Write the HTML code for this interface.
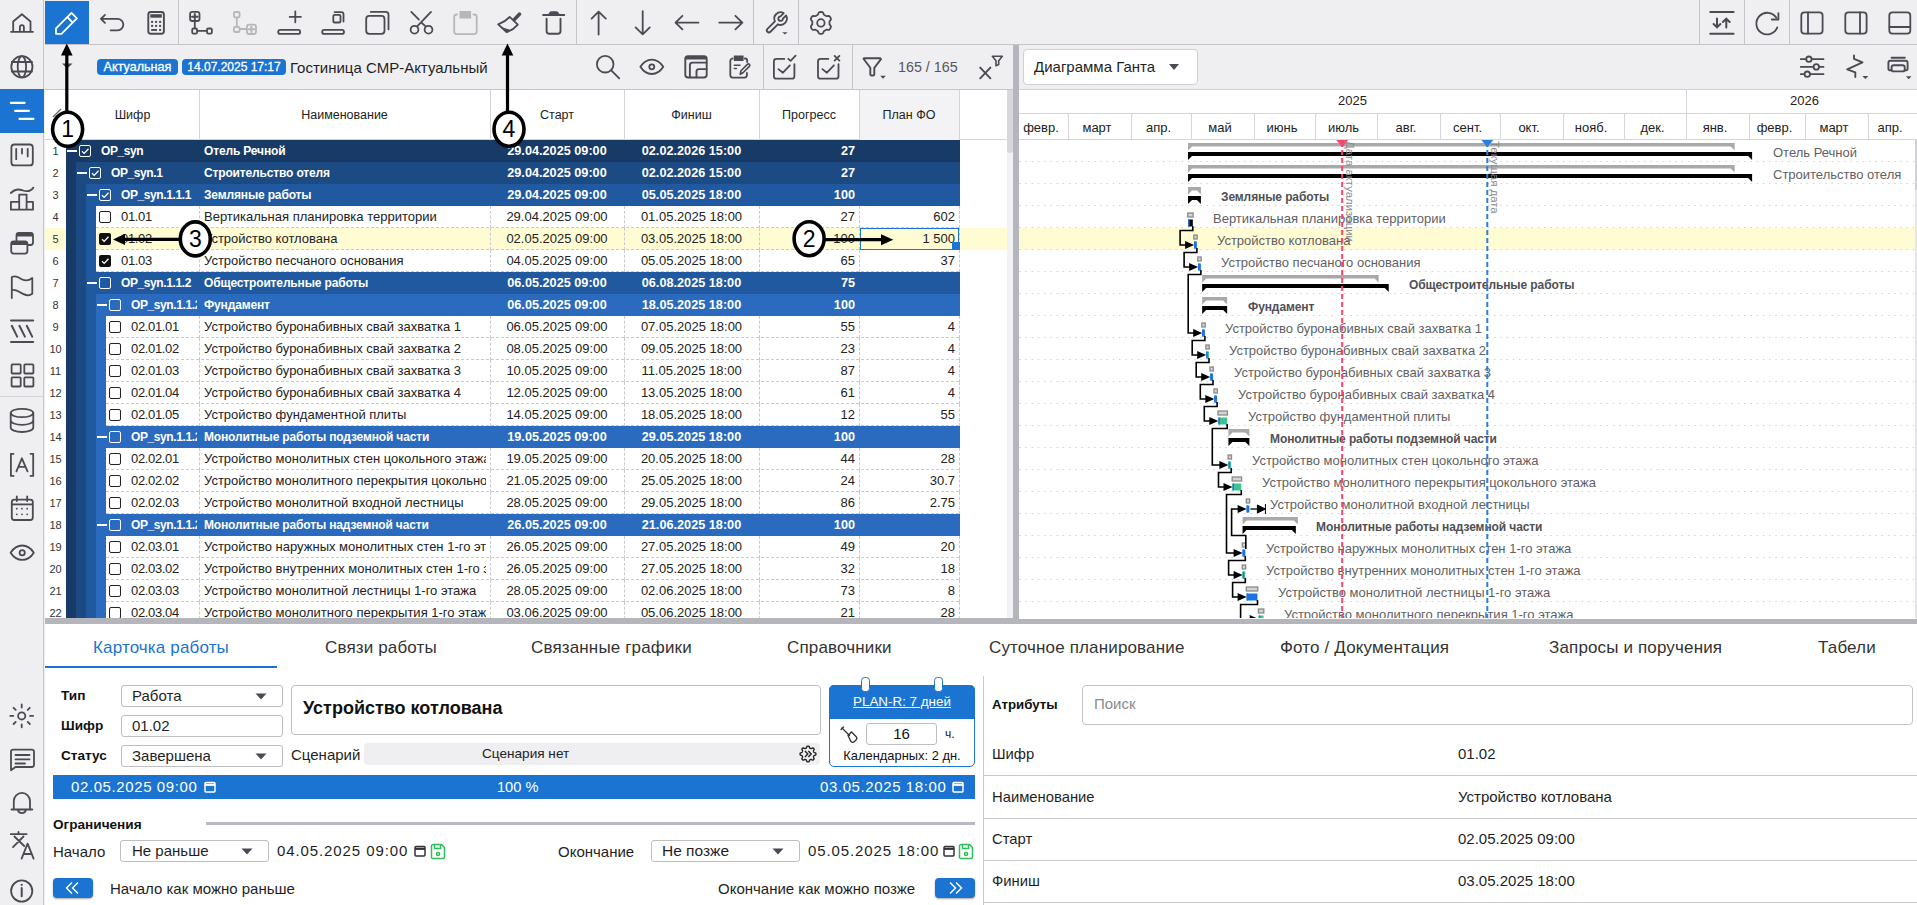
<!DOCTYPE html><html><head><meta charset="utf-8"><style>
html,body{margin:0;padding:0;}
body{width:1917px;height:905px;overflow:hidden;position:relative;background:#efeff2;font-family:"Liberation Sans",sans-serif;color:#222;}
div{box-sizing:border-box;}
</style></head><body>
<div style="position:absolute;left:0px;top:0px;width:44px;height:905px;background:#efeff2;border-right:1px solid #c4c4ca;"></div>
<div style="position:absolute;left:0px;top:89px;width:44px;height:44px;background:#1b74d2;"></div>
<div style="position:absolute;left:0px;top:396px;width:44px;height:1px;background:#d2d2d6;"></div>
<div style="position:absolute;left:45px;top:0px;width:1872px;height:45px;background:#efeff2;border-bottom:1px solid #c4c4ca;"></div>
<div style="position:absolute;left:45px;top:1px;width:44px;height:43px;background:#1b74d2;"></div>
<div style="position:absolute;left:178px;top:0px;width:1px;height:44px;background:#c4c4ca;"></div>
<div style="position:absolute;left:576px;top:0px;width:1px;height:44px;background:#c4c4ca;"></div>
<div style="position:absolute;left:753px;top:0px;width:1px;height:44px;background:#c4c4ca;"></div>
<div style="position:absolute;left:798px;top:0px;width:1px;height:44px;background:#c4c4ca;"></div>
<div style="position:absolute;left:1699px;top:0px;width:1px;height:44px;background:#c4c4ca;"></div>
<div style="position:absolute;left:1744px;top:0px;width:1px;height:44px;background:#c4c4ca;"></div>
<div style="position:absolute;left:1789px;top:0px;width:1px;height:44px;background:#c4c4ca;"></div>
<div style="position:absolute;left:45px;top:45px;width:968px;height:45px;background:#efeff2;border-bottom:1px solid #c4c4ca;"></div>
<div style="position:absolute;left:763px;top:45px;width:1px;height:44px;background:#c4c4ca;"></div>
<div style="position:absolute;left:852px;top:45px;width:1px;height:44px;background:#c4c4ca;"></div>
<div style="position:absolute;left:1019px;top:45px;width:898px;height:45px;background:#efeff2;border-bottom:1px solid #c4c4ca;"></div>
<svg style="position:absolute;left:0;top:0;width:1917px;height:905px;pointer-events:none" viewBox="0 0 1917 905"><path d="M11 31.8H33 M13.2 31.8V21.5L21.9 14.2 30.5 21.5V31.8 M19.9 31.8V27.2a2 2 0 0 1 4 0V31.8" fill="none" stroke="#4a4a52" stroke-width="1.8" stroke-linecap="round" stroke-linejoin="round" /><circle cx="21.9" cy="66.8" r="10.6" fill="none" stroke="#4a4a52" stroke-width="1.8"/><ellipse cx="21.9" cy="66.8" rx="4.2" ry="10.6" fill="none" stroke="#4a4a52" stroke-width="1.8"/><path d="M11.8 62H32 M11.8 71.5H32" fill="none" stroke="#4a4a52" stroke-width="1.8" stroke-linecap="round" stroke-linejoin="round" /><path d="M10.8 102.8H24.6 M15.1 110.8H29 M19.4 118.8H33.5" fill="none" stroke="#fff" stroke-width="2.2" stroke-linecap="round" stroke-linejoin="round" /><rect x="11.4" y="144.5" width="21.4" height="20.9" rx="3" fill="none" stroke="#4a4a52" stroke-width="1.8" stroke-linecap="round" stroke-linejoin="round"/><path d="M16.2 148.8V159.2 M22 148.8V153.5 M27.7 148.8V156.4" fill="none" stroke="#4a4a52" stroke-width="1.8" stroke-linecap="round" stroke-linejoin="round" /><path d="M10.8 193C16 188 20 189.5 23 190.5S30 192 33.4 187.6" fill="none" stroke="#4a4a52" stroke-width="1.8" stroke-linecap="round" stroke-linejoin="round" /><path d="M10.9 209.7V201.8H19.2V209.7Z M19.2 209.7V194.6H26.6V209.7 M26.6 209.7V201.8H33V209.7Z M10.9 209.7H33" fill="none" stroke="#4a4a52" stroke-width="1.8" stroke-linecap="round" stroke-linejoin="round" /><rect x="16.5" y="232.8" width="16.5" height="12.2" rx="2.5" fill="none" stroke="#4a4a52" stroke-width="1.8" stroke-linecap="round" stroke-linejoin="round"/><path d="M16.5 235.5V234.5a2 2 0 0 1 2-2H31a2 2 0 0 1 2 2V236.5H16.5Z" fill="#4a4a52"/><rect x="11.2" y="241.3" width="16.2" height="12.3" rx="2.5" fill="#efeff2" stroke="#4a4a52" stroke-width="1.8"/><path d="M11.2 244.5V243.5a2 2 0 0 1 2-2H25.4a2 2 0 0 1 2 2V245H11.2Z" fill="#4a4a52"/><path d="M11.8 298V277C17 275 19 278 22.2 279.5S28.5 281 32.3 278V293.8C28.5 296.5 25.5 295 22.2 293.5S16 289 11.8 290" fill="none" stroke="#4a4a52" stroke-width="1.8" stroke-linecap="round" stroke-linejoin="round" /><path d="M11 320.4H33.2 M11 342H33.2 M11.8 325.8L17.2 336.6 M19.4 325.8L24.9 336.6 M26.8 325.8L32.2 336.6" fill="none" stroke="#4a4a52" stroke-width="2" stroke-linecap="round" stroke-linejoin="round" /><rect x="11.6" y="364.4" width="9.1" height="9.1" rx="0.8" fill="none" stroke="#4a4a52" stroke-width="1.8" stroke-linecap="round" stroke-linejoin="round"/><rect x="24.3" y="364.4" width="9.1" height="9.1" rx="0.8" fill="none" stroke="#4a4a52" stroke-width="1.8" stroke-linecap="round" stroke-linejoin="round"/><rect x="11.6" y="377.4" width="9.1" height="9.1" rx="0.8" fill="none" stroke="#4a4a52" stroke-width="1.8" stroke-linecap="round" stroke-linejoin="round"/><rect x="24.3" y="377.4" width="9.1" height="9.1" rx="0.8" fill="none" stroke="#4a4a52" stroke-width="1.8" stroke-linecap="round" stroke-linejoin="round"/><ellipse cx="22" cy="413" rx="11.3" ry="4.2" fill="none" stroke="#4a4a52" stroke-width="1.8"/><path d="M10.7 413V427.5C10.7 430 15.5 432 22 432S33.3 430 33.3 427.5V413 M10.7 420.3C10.7 422.8 15.5 424.8 22 424.8S33.3 422.8 33.3 420.3" fill="none" stroke="#4a4a52" stroke-width="1.8" stroke-linecap="round" stroke-linejoin="round" /><path d="M13.5 453.8H10.9V475.9H13.5 M30.5 453.8H33.2V475.9H30.5 M16.4 471.3L21.9 458.3 27.5 471.3 M18.3 466.8H25.6" fill="none" stroke="#4a4a52" stroke-width="1.8" stroke-linecap="round" stroke-linejoin="round" /><rect x="11.8" y="499.6" width="21" height="20.4" rx="2.5" fill="none" stroke="#4a4a52" stroke-width="1.8" stroke-linecap="round" stroke-linejoin="round"/><path d="M16.8 496.3V501 M27.2 496.3V501" fill="none" stroke="#4a4a52" stroke-width="1.8" stroke-linecap="round" stroke-linejoin="round" /><path d="M11.8 503.5H32.8V505.3H11.8Z" fill="#4a4a52"/><circle cx="16.8" cy="508.7" r="0.9" fill="#4a4a52" stroke="#4a4a52" stroke-width="0"/><circle cx="22" cy="508.7" r="0.9" fill="#4a4a52" stroke="#4a4a52" stroke-width="0"/><circle cx="27.2" cy="508.7" r="0.9" fill="#4a4a52" stroke="#4a4a52" stroke-width="0"/><circle cx="16.8" cy="514.3" r="0.9" fill="#4a4a52" stroke="#4a4a52" stroke-width="0"/><circle cx="22" cy="514.3" r="0.9" fill="#4a4a52" stroke="#4a4a52" stroke-width="0"/><circle cx="27.2" cy="514.3" r="0.9" fill="#4a4a52" stroke="#4a4a52" stroke-width="0"/><path d="M10.6 552.7C14 547.5 17.5 545.5 22.2 545.5S30.5 547.5 33.8 552.7C30.5 557.9 27 559.9 22.2 559.9S14 557.9 10.6 552.7Z" fill="none" stroke="#4a4a52" stroke-width="1.8" stroke-linecap="round" stroke-linejoin="round" /><circle cx="22.2" cy="552.7" r="2.6" fill="none" stroke="#4a4a52" stroke-width="1.8"/><circle cx="21.7" cy="715.9" r="3.6" fill="none" stroke="#4a4a52" stroke-width="1.8"/><path d="M21.7 704.5V707.5 M21.7 724.3V727.3 M10.3 715.9H13.3 M30.1 715.9H33.1 M13.6 707.8L15.7 709.9 M27.7 721.9L29.8 724 M13.6 724L15.7 721.9 M27.7 709.9L29.8 707.8" fill="none" stroke="#4a4a52" stroke-width="1.8" stroke-linecap="round" stroke-linejoin="round" /><path d="M11 770.3V751.8A2.2 2.2 0 0 1 13.2 749.6H31.8A2.2 2.2 0 0 1 34 751.8V764.8A2.2 2.2 0 0 1 31.8 767H15.5Z M15.5 755H29.5 M15.5 759.3H29.5 M15.5 763.5H25" fill="none" stroke="#4a4a52" stroke-width="1.8" stroke-linecap="round" stroke-linejoin="round" /><path d="M11.5 809.5H32.3 M13.8 809.5V801A8 8 0 0 1 30 801V809.5 M17.8 809.8A4.2 4.2 0 0 0 26 809.8" fill="none" stroke="#4a4a52" stroke-width="1.8" stroke-linecap="round" stroke-linejoin="round" /><path d="M10.8 834.2H26.6 M18.5 831.8V834.2 M14.4 836.5L24.2 846 M23.5 836.5L13 847.2 M21.6 858.6L27.6 843.6 33.6 858.6 M23.5 854H31.7" fill="none" stroke="#4a4a52" stroke-width="1.8" stroke-linecap="round" stroke-linejoin="round" /><circle cx="21.7" cy="891" r="10.6" fill="none" stroke="#4a4a52" stroke-width="1.8"/><path d="M21.7 888V896.2" fill="none" stroke="#4a4a52" stroke-width="2" stroke-linecap="round" stroke-linejoin="round" /><circle cx="21.7" cy="884.8" r="1.1" fill="#4a4a52" stroke="#4a4a52" stroke-width="0"/><path d="M56 28.4V33.8H61.4L76.9 18.3L71.5 12.9Z M67.3 17.1L72.7 22.5" fill="none" stroke="#fff" stroke-width="1.8" stroke-linecap="round" stroke-linejoin="round" /><path d="M105 14.9L100.9 18.85 105 22.8 M100.9 18.85H117.6A5.75 5.75 0 0 1 117.6 30.35H110.6" fill="none" stroke="#4a4a52" stroke-width="1.8" stroke-linecap="round" stroke-linejoin="round" /><rect x="148.3" y="12" width="15.6" height="21.8" rx="2.5" fill="none" stroke="#4a4a52" stroke-width="1.9" stroke-linecap="round" stroke-linejoin="round"/><path d="M150.3 14.2H161.8V17.7H150.3Z" fill="#4a4a52"/><rect x="151.1" y="20.9" width="2" height="2" fill="#4a4a52"/><rect x="155.1" y="20.9" width="2" height="2" fill="#4a4a52"/><rect x="159.1" y="20.9" width="2" height="2" fill="#4a4a52"/><rect x="151.1" y="24.9" width="2" height="2" fill="#4a4a52"/><rect x="155.1" y="24.9" width="2" height="2" fill="#4a4a52"/><rect x="159.1" y="24.9" width="2" height="2" fill="#4a4a52"/><rect x="159.1" y="28.9" width="2" height="2" fill="#4a4a52"/><path d="M151.2 29H157V30.9H151.2Z" fill="#4a4a52"/><rect x="190.1" y="11.9" width="9.4" height="9.1" rx="2.3" fill="none" stroke="#4a4a52" stroke-width="1.8" stroke-linecap="round" stroke-linejoin="round"/><path d="M194.8 13.9V19.5 M192 16.7H197.6" fill="none" stroke="#4a4a52" stroke-width="2" stroke-linecap="round" stroke-linejoin="round" /><path d="M194.8 21.2V28.2 M197.3 30.9H206.6" fill="none" stroke="#4a4a52" stroke-width="1.8" stroke-linecap="round" stroke-linejoin="round" /><rect x="192.2" y="28.5" width="4.9" height="5.1" rx="1.3" fill="none" stroke="#4a4a52" stroke-width="1.8" stroke-linecap="round" stroke-linejoin="round"/><rect x="207" y="28.5" width="4.9" height="5.1" rx="1.3" fill="none" stroke="#4a4a52" stroke-width="1.8" stroke-linecap="round" stroke-linejoin="round"/><rect x="233.9" y="12" width="5.7" height="5.3" rx="1.3" fill="none" stroke="#b6b6bc" stroke-width="1.8" stroke-linecap="round" stroke-linejoin="round"/><path d="M236.8 17.6V26.6 M240.5 29H246.3" fill="none" stroke="#b6b6bc" stroke-width="1.8" stroke-linecap="round" stroke-linejoin="round" /><rect x="233.9" y="26.8" width="5.7" height="5.2" rx="1.3" fill="none" stroke="#b6b6bc" stroke-width="1.8" stroke-linecap="round" stroke-linejoin="round"/><rect x="246.9" y="24.6" width="9.1" height="9.4" rx="2.3" fill="none" stroke="#b6b6bc" stroke-width="1.8" stroke-linecap="round" stroke-linejoin="round"/><path d="M251.4 26.5V32.1 M248.6 29.3H254.2" fill="none" stroke="#b6b6bc" stroke-width="2" stroke-linecap="round" stroke-linejoin="round" /><path d="M295.3 11.3V22.3 M289.7 16.9H300.9" fill="none" stroke="#4a4a52" stroke-width="1.8" stroke-linecap="round" stroke-linejoin="round" /><rect x="278.2" y="29.9" width="22" height="4" rx="2" fill="none" stroke="#4a4a52" stroke-width="1.8" stroke-linecap="round" stroke-linejoin="round"/><rect x="322.2" y="29.9" width="21.8" height="4" rx="2" fill="none" stroke="#4a4a52" stroke-width="1.8" stroke-linecap="round" stroke-linejoin="round"/><rect x="333.3" y="14.9" width="7.2" height="7.6" rx="1.3" fill="none" stroke="#4a4a52" stroke-width="1.8" stroke-linecap="round" stroke-linejoin="round"/><path d="M334.6 12.1H341.3A2.2 2.2 0 0 1 343.5 14.3V21.5" fill="none" stroke="#4a4a52" stroke-width="1.8" stroke-linecap="round" stroke-linejoin="round" /><rect x="366.2" y="15.9" width="18.3" height="17.9" rx="3" fill="none" stroke="#4a4a52" stroke-width="1.8" stroke-linecap="round" stroke-linejoin="round"/><path d="M370.8 11.9H385.8A2.7 2.7 0 0 1 388.5 14.6V29.4" fill="none" stroke="#4a4a52" stroke-width="1.8" stroke-linecap="round" stroke-linejoin="round" /><circle cx="414.5" cy="29.7" r="3.9" fill="none" stroke="#4a4a52" stroke-width="1.8"/><circle cx="428.5" cy="29.7" r="3.9" fill="none" stroke="#4a4a52" stroke-width="1.8"/><path d="M431 11.9L417.4 26.1 M411.3 11.9L418.9 19.6 M421.8 23L425.4 26.1" fill="none" stroke="#4a4a52" stroke-width="1.8" stroke-linecap="round" stroke-linejoin="round" /><path d="M457 14.5H456.7A2.5 2.5 0 0 0 454.2 17V31.6A2.5 2.5 0 0 0 456.7 34.1H474.2A2.5 2.5 0 0 0 476.7 31.6V17A2.5 2.5 0 0 0 474.2 14.5H473.5" fill="none" stroke="#b6b6bc" stroke-width="1.8" stroke-linecap="round" stroke-linejoin="round" /><path d="M459.5 11H471.1V18.5H459.5Z" fill="#b6b6bc"/><path d="M519.6 14L514.6 19.2" fill="none" stroke="#4a4a52" stroke-width="3.4" stroke-linecap="round" stroke-linejoin="round" /><path d="M509.7 16.9L517.8 24.6Q513.2 30 506.5 32.2L498.2 24.4Q505.2 21.8 509.7 16.9Z" fill="none" stroke="#4a4a52" stroke-width="1.8" stroke-linecap="round" stroke-linejoin="round" /><path d="M499.5 25.6L506.5 32.2Q510 31.3 511.5 30Q504 28.8 499.5 25.6Z" fill="#4a4a52"/><path d="M543.2 15H564.2" fill="none" stroke="#4a4a52" stroke-width="2.1" stroke-linecap="round" stroke-linejoin="round" /><path d="M547.6 15.2L549.6 12.2Q550.2 11.3 551.5 11.3H556.3Q557.6 11.3 558.2 12.2L560.2 15.2Z" fill="#4a4a52"/><path d="M546.6 18.8V31A2.8 2.8 0 0 0 549.4 33.8H557.7A2.8 2.8 0 0 0 560.5 31V18.8" fill="none" stroke="#4a4a52" stroke-width="1.9" stroke-linecap="round" stroke-linejoin="round" /><path d="M598.6 11.6V34.6 M591.6 18.6L598.6 11.6 605.8 18.6" fill="none" stroke="#4a4a52" stroke-width="1.8" stroke-linecap="round" stroke-linejoin="round" /><path d="M642.7 11.1V34.3 M635.6 27.4L642.7 34.3 649.8 27.4" fill="none" stroke="#4a4a52" stroke-width="1.8" stroke-linecap="round" stroke-linejoin="round" /><path d="M675.5 22.6H698.5 M682.4 15.8L675.5 22.6 682.4 29.4" fill="none" stroke="#4a4a52" stroke-width="1.8" stroke-linecap="round" stroke-linejoin="round" /><path d="M719.2 22.6H742.4 M735.4 15.8L742.4 22.6 735.4 29.4" fill="none" stroke="#4a4a52" stroke-width="1.8" stroke-linecap="round" stroke-linejoin="round" /><path d="M786.09 15.51A6.3 6.3 0 0 1 777.88 24.28L770.42 31.75A2.1 2.1 0 0 1 767.45 28.78L774.92 21.32A6.3 6.3 0 0 1 783.69 13.11L780.49 16.30A2.3 2.3 0 1 0 782.90 18.71Z" fill="none" stroke="#4a4a52" stroke-width="1.8" stroke-linecap="round" stroke-linejoin="round" /><path d="M782.2 32.2H787.6L784.9 34.6Z" fill="#4a4a52"/><path d="M829.50 22.90 L829.50 23.28 L829.49 23.65 L829.50 24.03 L829.57 24.43 L829.83 24.88 L830.32 25.42 L830.78 26.01 L830.95 26.56 L830.90 27.04 L830.76 27.50 L830.56 27.93 L830.34 28.35 L830.09 28.75 L829.81 29.14 L829.49 29.49 L829.09 29.77 L828.54 29.90 L827.79 29.79 L827.08 29.64 L826.56 29.65 L826.18 29.78 L825.85 29.96 L825.52 30.16 L825.20 30.35 L824.87 30.53 L824.54 30.71 L824.22 30.91 L823.91 31.18 L823.65 31.62 L823.42 32.32 L823.14 33.01 L822.76 33.43 L822.31 33.64 L821.85 33.74 L821.38 33.79 L820.90 33.80 L820.42 33.79 L819.95 33.74 L819.49 33.64 L819.04 33.43 L818.66 33.01 L818.38 32.32 L818.15 31.62 L817.89 31.18 L817.58 30.91 L817.26 30.71 L816.93 30.53 L816.60 30.35 L816.28 30.16 L815.95 29.96 L815.62 29.78 L815.24 29.65 L814.72 29.64 L814.01 29.79 L813.26 29.90 L812.71 29.77 L812.31 29.49 L811.99 29.14 L811.71 28.75 L811.46 28.35 L811.24 27.93 L811.04 27.50 L810.90 27.04 L810.85 26.56 L811.02 26.01 L811.48 25.42 L811.97 24.88 L812.23 24.43 L812.30 24.03 L812.31 23.65 L812.30 23.28 L812.30 22.90 L812.30 22.52 L812.31 22.15 L812.30 21.77 L812.23 21.37 L811.97 20.92 L811.48 20.38 L811.02 19.79 L810.85 19.24 L810.90 18.76 L811.04 18.30 L811.24 17.87 L811.46 17.45 L811.71 17.05 L811.99 16.66 L812.31 16.31 L812.71 16.03 L813.26 15.90 L814.01 16.01 L814.72 16.16 L815.24 16.15 L815.62 16.02 L815.95 15.84 L816.28 15.64 L816.60 15.45 L816.93 15.27 L817.26 15.09 L817.58 14.89 L817.89 14.62 L818.15 14.18 L818.38 13.48 L818.66 12.79 L819.04 12.37 L819.49 12.16 L819.95 12.06 L820.42 12.01 L820.90 12.00 L821.38 12.01 L821.85 12.06 L822.31 12.16 L822.76 12.37 L823.14 12.79 L823.42 13.48 L823.65 14.18 L823.91 14.62 L824.22 14.89 L824.54 15.09 L824.87 15.27 L825.20 15.45 L825.52 15.64 L825.85 15.84 L826.18 16.02 L826.56 16.15 L827.08 16.16 L827.79 16.01 L828.54 15.90 L829.09 16.03 L829.49 16.31 L829.81 16.66 L830.09 17.05 L830.34 17.45 L830.56 17.87 L830.76 18.30 L830.90 18.76 L830.95 19.24 L830.78 19.79 L830.32 20.38 L829.83 20.92 L829.57 21.37 L829.50 21.77 L829.49 22.15 L829.50 22.52Z" fill="none" stroke="#4a4a52" stroke-width="1.8" stroke-linecap="round" stroke-linejoin="round" /><circle cx="820.9" cy="22.9" r="3.7" fill="none" stroke="#4a4a52" stroke-width="1.8"/><path d="M1710.3 11.9H1733.6 M1710.3 33.7H1733.6 M1717 18.5V27.4 M1713.6 24L1717 27.4 1720.4 24 M1726.3 27.6V18.6 M1722.9 22L1726.3 18.6 1729.7 22" fill="none" stroke="#4a4a52" stroke-width="2" stroke-linecap="round" stroke-linejoin="round" /><path d="M1777.3 27.4A10.8 10.8 0 1 1 1776.2 17.6 M1778.4 13.1V19.5H1771.8" fill="none" stroke="#4a4a52" stroke-width="1.8" stroke-linecap="round" stroke-linejoin="round" /><rect x="1801.3" y="12.3" width="21.3" height="21.3" rx="3.2" fill="none" stroke="#4a4a52" stroke-width="1.8" stroke-linecap="round" stroke-linejoin="round"/><path d="M1808 12.5V33.4" fill="none" stroke="#4a4a52" stroke-width="1.8" stroke-linecap="round" stroke-linejoin="round" /><rect x="1845.3" y="12.3" width="21.3" height="21.3" rx="3.2" fill="none" stroke="#4a4a52" stroke-width="1.8" stroke-linecap="round" stroke-linejoin="round"/><path d="M1860 12.5V33.4" fill="none" stroke="#4a4a52" stroke-width="1.8" stroke-linecap="round" stroke-linejoin="round" /><rect x="1889.3" y="12.3" width="21" height="21.3" rx="3.2" fill="none" stroke="#4a4a52" stroke-width="1.8" stroke-linecap="round" stroke-linejoin="round"/><path d="M1889.5 27H1910" fill="none" stroke="#4a4a52" stroke-width="1.8" stroke-linecap="round" stroke-linejoin="round" /><path d="M62 63.5H72.5L67.2 68.5Z" fill="#4a4a52"/><circle cx="605.2" cy="64.2" r="8.3" fill="none" stroke="#4a4a52" stroke-width="1.8"/><path d="M611.5 70.6L619.2 78.3" fill="none" stroke="#4a4a52" stroke-width="1.8" stroke-linecap="round" stroke-linejoin="round" /><path d="M640.4 66.8C643.5 61.8 647.3 59.6 651.8 59.6S660.1 61.8 663.3 66.8C660.1 71.8 656.3 74 651.8 74S643.5 71.8 640.4 66.8Z" fill="none" stroke="#4a4a52" stroke-width="1.8" stroke-linecap="round" stroke-linejoin="round" /><circle cx="651.8" cy="66.8" r="2.5" fill="none" stroke="#4a4a52" stroke-width="1.8"/><rect x="685.3" y="56.2" width="21.4" height="21.3" rx="2.7" fill="none" stroke="#4a4a52" stroke-width="1.9" stroke-linecap="round" stroke-linejoin="round"/><path d="M685.3 59.5V58.9A2.7 2.7 0 0 1 688 56.2H704A2.7 2.7 0 0 1 706.7 58.9V59.5Z" fill="#4a4a52"/><path d="M689.9 77.3V65.1A2.5 2.5 0 0 1 692.4 62.6H706.5 M696.5 77.3V71.6A2.5 2.5 0 0 1 699 69.1H706.5" fill="none" stroke="#4a4a52" stroke-width="1.9" stroke-linecap="round" stroke-linejoin="round" /><path d="M732.6 58.5H732.2A2.5 2.5 0 0 0 730.3 60.7V75.5A2.5 2.5 0 0 0 732.5 77.6H744.6A2.5 2.5 0 0 0 746.9 75.5V73 M744.8 58.5H745A2.2 2.2 0 0 1 747.2 60.7V62" fill="none" stroke="#4a4a52" stroke-width="1.8" stroke-linecap="round" stroke-linejoin="round" /><path d="M733.8 55.5H743.6V61H733.8Z" fill="#4a4a52"/><path d="M734.3 65.2H740 M734.3 68.6H736.4" fill="none" stroke="#4a4a52" stroke-width="1.5" stroke-linecap="round" stroke-linejoin="round" /><path d="M740.2 74.3L741 70.8 747.4 64.4A1.4 1.4 0 0 1 749.4 66.4L743 72.8Z" fill="none" stroke="#4a4a52" stroke-width="1.6" stroke-linecap="round" stroke-linejoin="round" /><path d="M784.3 58.9H776.4A2.5 2.5 0 0 0 773.9 61.4V76.2A2.5 2.5 0 0 0 776.4 78.7H791.9A2.5 2.5 0 0 0 794.4 76.2V64.2 M778.4 69.1L782.9 72.7 789.9 65.3 M788.3 58.8L790.6 60.9 795.6 55.7" fill="none" stroke="#4a4a52" stroke-width="1.8" stroke-linecap="round" stroke-linejoin="round" /><path d="M828.3 58.9H820.5A2.5 2.5 0 0 0 818 61.4V76.2A2.5 2.5 0 0 0 820.5 78.7H836A2.5 2.5 0 0 0 838.5 76.2V64.2 M822.4 69.1L826.9 72.7 833.9 65.3 M834.6 55.9L839.4 60.6 M839.4 55.9L834.6 60.6" fill="none" stroke="#4a4a52" stroke-width="1.8" stroke-linecap="round" stroke-linejoin="round" /><path d="M863.5 58.8A1 1 0 0 1 864.3 58.3H880.3A1 1 0 0 1 881 59.1L874.3 67.8V74.2A1.3 1.3 0 0 1 873 75.5H871.6A1.3 1.3 0 0 1 870.3 74.2V67.8Z" fill="none" stroke="#4a4a52" stroke-width="1.9" stroke-linecap="round" stroke-linejoin="round" /><path d="M880.2 75.8H885.8L883 78.7Z" fill="#4a4a52"/><path d="M980.2 67.6L990.4 78.3 M990.4 67.6L980.2 78.3" fill="none" stroke="#4a4a52" stroke-width="1.9" stroke-linecap="round" stroke-linejoin="round" /><path d="M992.3 56.3H1002.3L998.7 60.8V64.6L996 65.7V60.8Z" fill="none" stroke="#4a4a52" stroke-width="1.6" stroke-linecap="round" stroke-linejoin="round" /><path d="M1800.8 59.2H1823.5 M1800.8 66.9H1823.5 M1800.8 74.2H1823.5" fill="none" stroke="#4a4a52" stroke-width="1.8" stroke-linecap="round" stroke-linejoin="round" /><circle cx="1808.9" cy="59.2" r="2.7" fill="#efeff2" stroke="#4a4a52" stroke-width="1.8"/><circle cx="1816.3" cy="66.9" r="2.7" fill="#efeff2" stroke="#4a4a52" stroke-width="1.8"/><circle cx="1807.3" cy="74.2" r="2.7" fill="#efeff2" stroke="#4a4a52" stroke-width="1.8"/><path d="M1854 55.5V58.8L1862.5 62.4 1847.2 69.3 1855.3 72.4V77" fill="none" stroke="#4a4a52" stroke-width="1.9" stroke-linecap="round" stroke-linejoin="round" /><path d="M1862.3 76H1868.3L1865.3 79Z" fill="#4a4a52"/><path d="M1891.6 57.8H1904.8 M1891 70.2H1889.6A1.2 1.2 0 0 1 1888.4 69V62.8A2 2 0 0 1 1890.4 60.8H1905.6A2 2 0 0 1 1907.6 62.8V69A1.2 1.2 0 0 1 1906.4 70.2H1905" fill="none" stroke="#4a4a52" stroke-width="1.9" stroke-linecap="round" stroke-linejoin="round" /><rect x="1891.6" y="65.2" width="13.1" height="6.2" rx="2" fill="none" stroke="#4a4a52" stroke-width="1.9" stroke-linecap="round" stroke-linejoin="round"/><path d="M1906 76.3H1911.5L1908.7 79.2Z" fill="#4a4a52"/></svg>
<div style="position:absolute;left:97px;top:59px;width:81px;height:16px;line-height:16px;white-space:nowrap;background:#1b74d2;color:#fff;font-size:12.6px;border-radius:4px;text-align:center;-webkit-text-stroke:0.3px #fff;">Актуальная</div>
<div style="position:absolute;left:182px;top:59px;width:104px;height:16px;line-height:16px;white-space:nowrap;background:#1b74d2;color:#fff;font-size:12px;border-radius:4px;text-align:center;-webkit-text-stroke:0.3px #fff;">14.07.2025 17:17</div>
<div style="position:absolute;left:290px;top:57px;height:21px;line-height:21px;white-space:nowrap;color:#1f1f1f;font-size:15px;">Гостиница СМР-Актуальный</div>
<div style="position:absolute;left:898px;top:57px;height:20px;line-height:20px;white-space:nowrap;color:#55555c;font-size:14.3px;">165 / 165</div>
<div style="position:absolute;left:1023px;top:49px;width:175px;height:36px;line-height:36px;white-space:nowrap;background:#fff;border:1px solid #cfcfd4;border-radius:4px;"></div>
<div style="position:absolute;left:1034px;top:57px;height:20px;line-height:20px;white-space:nowrap;color:#1f1f1f;font-size:15px;">Диаграмма Ганта</div>
<svg style="position:absolute;left:1168px;top:63px;width:12px;height:8px;overflow:visible" viewBox="0 0 12 8" ><path d="M1 1h10l-5 6z" fill="#4a4a52"/></svg>
<div style="position:absolute;left:45px;top:90px;width:968px;height:529px;background:#fff;"></div>
<div style="position:absolute;left:45px;top:90px;width:968px;height:50px;background:#fff;border-bottom:1px solid #d4d4d8;"></div>
<div style="position:absolute;left:859px;top:90px;width:100px;height:50px;background:#f3f3f5;"></div>
<div style="position:absolute;left:199px;top:90px;width:1px;height:50px;background:#d4d4d8;"></div>
<div style="position:absolute;left:490px;top:90px;width:1px;height:50px;background:#d4d4d8;"></div>
<div style="position:absolute;left:624px;top:90px;width:1px;height:50px;background:#d4d4d8;"></div>
<div style="position:absolute;left:759px;top:90px;width:1px;height:50px;background:#d4d4d8;"></div>
<div style="position:absolute;left:859px;top:90px;width:1px;height:50px;background:#d4d4d8;"></div>
<div style="position:absolute;left:959px;top:90px;width:1px;height:50px;background:#d4d4d8;"></div>
<div style="position:absolute;left:66px;top:106px;width:133px;height:18px;line-height:18px;white-space:nowrap;font-size:12.5px;color:#222;text-align:center;">Шифр</div>
<div style="position:absolute;left:199px;top:106px;width:291px;height:18px;line-height:18px;white-space:nowrap;font-size:12.5px;color:#222;text-align:center;">Наименование</div>
<div style="position:absolute;left:490px;top:106px;width:134px;height:18px;line-height:18px;white-space:nowrap;font-size:12.5px;color:#222;text-align:center;">Старт</div>
<div style="position:absolute;left:624px;top:106px;width:135px;height:18px;line-height:18px;white-space:nowrap;font-size:12.5px;color:#222;text-align:center;">Финиш</div>
<div style="position:absolute;left:759px;top:106px;width:100px;height:18px;line-height:18px;white-space:nowrap;font-size:12.5px;color:#222;text-align:center;">Прогресс</div>
<div style="position:absolute;left:859px;top:106px;width:100px;height:18px;line-height:18px;white-space:nowrap;font-size:12.5px;color:#222;text-align:center;">План ФО</div>
<svg style="position:absolute;left:52px;top:108px;width:10px;height:10px;overflow:visible" viewBox="0 0 10 10" ><path d="M1 9L9 1" stroke="#666" stroke-width="1.2"/></svg>
<div style="position:absolute;left:45px;top:140px;width:968px;height:478px;overflow:hidden;">
<div style="position:absolute;left:0px;top:0px;width:21px;height:22px;background:#fff;"></div>
<div style="position:absolute;left:0px;top:0px;width:21px;height:22px;line-height:22px;white-space:nowrap;font-size:11px;color:#333;text-align:center;">1</div>
<div style="position:absolute;left:21px;top:0px;width:894px;height:22px;background:#173a66;"></div>
<div style="position:absolute;left:22px;top:10px;width:10px;height:2px;background:#fff;"></div>
<div style="position:absolute;left:34px;top:5px;width:12px;height:12px;border:1.5px solid #fff;border-radius:2px;"></div>
<svg style="position:absolute;left:34px;top:5px;width:12px;height:12px;overflow:visible" viewBox="0 0 12 12" ><path d="M3 6.2l2.2 2.2L9.5 3.8" fill="none" stroke="#fff" stroke-width="1.3"/></svg>
<div style="position:absolute;left:56px;top:0px;width:96px;height:22px;overflow:hidden;"><div style="position:absolute;left:0px;top:0px;height:22px;line-height:22px;white-space:nowrap;font-size:12px;font-weight:bold;color:#fff;letter-spacing:-0.4px;">OP_syn</div></div>
<div style="position:absolute;left:159px;top:0px;height:22px;line-height:22px;white-space:nowrap;font-size:12px;font-weight:bold;color:#fff;letter-spacing:-0.15px;">Отель Речной</div>
<div style="position:absolute;left:445px;top:0px;width:134px;height:22px;line-height:22px;white-space:nowrap;font-size:12.7px;font-weight:bold;color:#fff;text-align:center;">29.04.2025 09:00</div>
<div style="position:absolute;left:579px;top:0px;width:135px;height:22px;line-height:22px;white-space:nowrap;font-size:12.7px;font-weight:bold;color:#fff;text-align:center;">02.02.2026 15:00</div>
<div style="position:absolute;left:714px;top:0px;width:96px;height:22px;line-height:22px;white-space:nowrap;font-size:12.7px;font-weight:bold;color:#fff;text-align:right;">27</div>
<div style="position:absolute;left:0px;top:22px;width:21px;height:22px;background:#fff;"></div>
<div style="position:absolute;left:0px;top:22px;width:21px;height:22px;line-height:22px;white-space:nowrap;font-size:11px;color:#333;text-align:center;">2</div>
<div style="position:absolute;left:21px;top:22px;width:10px;height:22px;background:#173a66;"></div>
<div style="position:absolute;left:31px;top:22px;width:884px;height:22px;background:#1c4b84;"></div>
<div style="position:absolute;left:32px;top:32px;width:10px;height:2px;background:#fff;"></div>
<div style="position:absolute;left:44px;top:27px;width:12px;height:12px;border:1.5px solid #fff;border-radius:2px;"></div>
<svg style="position:absolute;left:44px;top:27px;width:12px;height:12px;overflow:visible" viewBox="0 0 12 12" ><path d="M3 6.2l2.2 2.2L9.5 3.8" fill="none" stroke="#fff" stroke-width="1.3"/></svg>
<div style="position:absolute;left:66px;top:22px;width:86px;height:22px;overflow:hidden;"><div style="position:absolute;left:0px;top:0px;height:22px;line-height:22px;white-space:nowrap;font-size:12px;font-weight:bold;color:#fff;letter-spacing:-0.4px;">OP_syn.1</div></div>
<div style="position:absolute;left:159px;top:22px;height:22px;line-height:22px;white-space:nowrap;font-size:12px;font-weight:bold;color:#fff;letter-spacing:-0.15px;">Строительство отеля</div>
<div style="position:absolute;left:445px;top:22px;width:134px;height:22px;line-height:22px;white-space:nowrap;font-size:12.7px;font-weight:bold;color:#fff;text-align:center;">29.04.2025 09:00</div>
<div style="position:absolute;left:579px;top:22px;width:135px;height:22px;line-height:22px;white-space:nowrap;font-size:12.7px;font-weight:bold;color:#fff;text-align:center;">02.02.2026 15:00</div>
<div style="position:absolute;left:714px;top:22px;width:96px;height:22px;line-height:22px;white-space:nowrap;font-size:12.7px;font-weight:bold;color:#fff;text-align:right;">27</div>
<div style="position:absolute;left:0px;top:44px;width:21px;height:22px;background:#fff;"></div>
<div style="position:absolute;left:0px;top:44px;width:21px;height:22px;line-height:22px;white-space:nowrap;font-size:11px;color:#333;text-align:center;">3</div>
<div style="position:absolute;left:21px;top:44px;width:10px;height:22px;background:#173a66;"></div>
<div style="position:absolute;left:31px;top:44px;width:10px;height:22px;background:#1c4b84;"></div>
<div style="position:absolute;left:41px;top:44px;width:874px;height:22px;background:#2159a0;"></div>
<div style="position:absolute;left:42px;top:54px;width:10px;height:2px;background:#fff;"></div>
<div style="position:absolute;left:54px;top:49px;width:12px;height:12px;border:1.5px solid #fff;border-radius:2px;"></div>
<svg style="position:absolute;left:54px;top:49px;width:12px;height:12px;overflow:visible" viewBox="0 0 12 12" ><path d="M3 6.2l2.2 2.2L9.5 3.8" fill="none" stroke="#fff" stroke-width="1.3"/></svg>
<div style="position:absolute;left:76px;top:44px;width:76px;height:22px;overflow:hidden;"><div style="position:absolute;left:0px;top:0px;height:22px;line-height:22px;white-space:nowrap;font-size:12px;font-weight:bold;color:#fff;letter-spacing:-0.4px;">OP_syn.1.1.1</div></div>
<div style="position:absolute;left:159px;top:44px;height:22px;line-height:22px;white-space:nowrap;font-size:12px;font-weight:bold;color:#fff;letter-spacing:-0.15px;">Земляные работы</div>
<div style="position:absolute;left:445px;top:44px;width:134px;height:22px;line-height:22px;white-space:nowrap;font-size:12.7px;font-weight:bold;color:#fff;text-align:center;">29.04.2025 09:00</div>
<div style="position:absolute;left:579px;top:44px;width:135px;height:22px;line-height:22px;white-space:nowrap;font-size:12.7px;font-weight:bold;color:#fff;text-align:center;">05.05.2025 18:00</div>
<div style="position:absolute;left:714px;top:44px;width:96px;height:22px;line-height:22px;white-space:nowrap;font-size:12.7px;font-weight:bold;color:#fff;text-align:right;">100</div>
<div style="position:absolute;left:0px;top:66px;width:21px;height:22px;background:#fff;"></div>
<div style="position:absolute;left:0px;top:66px;width:21px;height:22px;line-height:22px;white-space:nowrap;font-size:11px;color:#333;text-align:center;">4</div>
<div style="position:absolute;left:21px;top:66px;width:10px;height:22px;background:#173a66;"></div>
<div style="position:absolute;left:31px;top:66px;width:10px;height:22px;background:#1c4b84;"></div>
<div style="position:absolute;left:41px;top:66px;width:10px;height:22px;background:#2159a0;"></div>
<div style="position:absolute;left:51px;top:66px;width:863px;height:22px;background:#fff;"></div>
<div style="position:absolute;left:51px;top:87px;width:863px;height:1px;border-top:1px dashed #c9c9cf;"></div>
<div style="position:absolute;left:154px;top:66px;width:1px;height:22px;border-left:1px dashed #c9c9cf;"></div>
<div style="position:absolute;left:445px;top:66px;width:1px;height:22px;border-left:1px dashed #c9c9cf;"></div>
<div style="position:absolute;left:579px;top:66px;width:1px;height:22px;border-left:1px dashed #c9c9cf;"></div>
<div style="position:absolute;left:714px;top:66px;width:1px;height:22px;border-left:1px dashed #c9c9cf;"></div>
<div style="position:absolute;left:814px;top:66px;width:1px;height:22px;border-left:1px dashed #c9c9cf;"></div>
<div style="position:absolute;left:914px;top:66px;width:1px;height:22px;border-left:1px dashed #c9c9cf;"></div>
<div style="position:absolute;left:54px;top:71px;width:12px;height:12px;border:1.5px solid #222;border-radius:2px;background:#fff;"></div>
<div style="position:absolute;left:76px;top:66px;height:22px;line-height:22px;white-space:nowrap;font-size:13px;color:#222;letter-spacing:-0.35px;">01.01</div>
<div style="position:absolute;left:159px;top:66px;width:282px;height:22px;overflow:hidden;"><div style="position:absolute;left:0px;top:0px;height:22px;line-height:22px;white-space:nowrap;font-size:13px;color:#222;">Вертикальная планировка территории</div></div>
<div style="position:absolute;left:445px;top:66px;width:134px;height:22px;line-height:22px;white-space:nowrap;font-size:13px;color:#222;text-align:center;">29.04.2025 09:00</div>
<div style="position:absolute;left:579px;top:66px;width:135px;height:22px;line-height:22px;white-space:nowrap;font-size:13px;color:#222;text-align:center;">01.05.2025 18:00</div>
<div style="position:absolute;left:714px;top:66px;width:96px;height:22px;line-height:22px;white-space:nowrap;font-size:13px;color:#222;text-align:right;">27</div>
<div style="position:absolute;left:814px;top:66px;width:96px;height:22px;line-height:22px;white-space:nowrap;font-size:13px;color:#222;text-align:right;">602</div>
<div style="position:absolute;left:0px;top:88px;width:21px;height:22px;background:#fffbd3;"></div>
<div style="position:absolute;left:0px;top:88px;width:21px;height:22px;line-height:22px;white-space:nowrap;font-size:11px;color:#333;text-align:center;">5</div>
<div style="position:absolute;left:21px;top:88px;width:10px;height:22px;background:#173a66;"></div>
<div style="position:absolute;left:31px;top:88px;width:10px;height:22px;background:#1c4b84;"></div>
<div style="position:absolute;left:41px;top:88px;width:10px;height:22px;background:#2159a0;"></div>
<div style="position:absolute;left:51px;top:88px;width:911px;height:22px;background:#fffbd3;"></div>
<div style="position:absolute;left:51px;top:109px;width:863px;height:1px;border-top:1px dashed #c9c9cf;"></div>
<div style="position:absolute;left:154px;top:88px;width:1px;height:22px;border-left:1px dashed #c9c9cf;"></div>
<div style="position:absolute;left:445px;top:88px;width:1px;height:22px;border-left:1px dashed #c9c9cf;"></div>
<div style="position:absolute;left:579px;top:88px;width:1px;height:22px;border-left:1px dashed #c9c9cf;"></div>
<div style="position:absolute;left:714px;top:88px;width:1px;height:22px;border-left:1px dashed #c9c9cf;"></div>
<div style="position:absolute;left:814px;top:88px;width:1px;height:22px;border-left:1px dashed #c9c9cf;"></div>
<div style="position:absolute;left:914px;top:88px;width:1px;height:22px;border-left:1px dashed #c9c9cf;"></div>
<div style="position:absolute;left:54px;top:93px;width:12px;height:12px;background:#111;border-radius:2px;"></div>
<svg style="position:absolute;left:54px;top:93px;width:12px;height:12px;overflow:visible" viewBox="0 0 12 12" ><path d="M3 6.2l2.2 2.2L9.5 3.8" fill="none" stroke="#fff" stroke-width="1.3"/></svg>
<div style="position:absolute;left:76px;top:88px;height:22px;line-height:22px;white-space:nowrap;font-size:13px;color:#222;letter-spacing:-0.35px;">01.02</div>
<div style="position:absolute;left:159px;top:88px;width:282px;height:22px;overflow:hidden;"><div style="position:absolute;left:0px;top:0px;height:22px;line-height:22px;white-space:nowrap;font-size:13px;color:#222;">Устройство котлована</div></div>
<div style="position:absolute;left:445px;top:88px;width:134px;height:22px;line-height:22px;white-space:nowrap;font-size:13px;color:#222;text-align:center;">02.05.2025 09:00</div>
<div style="position:absolute;left:579px;top:88px;width:135px;height:22px;line-height:22px;white-space:nowrap;font-size:13px;color:#222;text-align:center;">03.05.2025 18:00</div>
<div style="position:absolute;left:714px;top:88px;width:96px;height:22px;line-height:22px;white-space:nowrap;font-size:13px;color:#222;text-align:right;">100</div>
<div style="position:absolute;left:814px;top:88px;width:96px;height:22px;line-height:22px;white-space:nowrap;font-size:13px;color:#222;text-align:right;">1 500</div>
<div style="position:absolute;left:815px;top:88px;width:99px;height:22px;border:1px solid #1b74d2;"></div>
<div style="position:absolute;left:907px;top:102px;width:8px;height:8px;background:#1b74d2;"></div>
<div style="position:absolute;left:0px;top:110px;width:21px;height:22px;background:#fff;"></div>
<div style="position:absolute;left:0px;top:110px;width:21px;height:22px;line-height:22px;white-space:nowrap;font-size:11px;color:#333;text-align:center;">6</div>
<div style="position:absolute;left:21px;top:110px;width:10px;height:22px;background:#173a66;"></div>
<div style="position:absolute;left:31px;top:110px;width:10px;height:22px;background:#1c4b84;"></div>
<div style="position:absolute;left:41px;top:110px;width:10px;height:22px;background:#2159a0;"></div>
<div style="position:absolute;left:51px;top:110px;width:863px;height:22px;background:#fff;"></div>
<div style="position:absolute;left:51px;top:131px;width:863px;height:1px;border-top:1px dashed #c9c9cf;"></div>
<div style="position:absolute;left:154px;top:110px;width:1px;height:22px;border-left:1px dashed #c9c9cf;"></div>
<div style="position:absolute;left:445px;top:110px;width:1px;height:22px;border-left:1px dashed #c9c9cf;"></div>
<div style="position:absolute;left:579px;top:110px;width:1px;height:22px;border-left:1px dashed #c9c9cf;"></div>
<div style="position:absolute;left:714px;top:110px;width:1px;height:22px;border-left:1px dashed #c9c9cf;"></div>
<div style="position:absolute;left:814px;top:110px;width:1px;height:22px;border-left:1px dashed #c9c9cf;"></div>
<div style="position:absolute;left:914px;top:110px;width:1px;height:22px;border-left:1px dashed #c9c9cf;"></div>
<div style="position:absolute;left:54px;top:115px;width:12px;height:12px;background:#111;border-radius:2px;"></div>
<svg style="position:absolute;left:54px;top:115px;width:12px;height:12px;overflow:visible" viewBox="0 0 12 12" ><path d="M3 6.2l2.2 2.2L9.5 3.8" fill="none" stroke="#fff" stroke-width="1.3"/></svg>
<div style="position:absolute;left:76px;top:110px;height:22px;line-height:22px;white-space:nowrap;font-size:13px;color:#222;letter-spacing:-0.35px;">01.03</div>
<div style="position:absolute;left:159px;top:110px;width:282px;height:22px;overflow:hidden;"><div style="position:absolute;left:0px;top:0px;height:22px;line-height:22px;white-space:nowrap;font-size:13px;color:#222;">Устройство песчаного основания</div></div>
<div style="position:absolute;left:445px;top:110px;width:134px;height:22px;line-height:22px;white-space:nowrap;font-size:13px;color:#222;text-align:center;">04.05.2025 09:00</div>
<div style="position:absolute;left:579px;top:110px;width:135px;height:22px;line-height:22px;white-space:nowrap;font-size:13px;color:#222;text-align:center;">05.05.2025 18:00</div>
<div style="position:absolute;left:714px;top:110px;width:96px;height:22px;line-height:22px;white-space:nowrap;font-size:13px;color:#222;text-align:right;">65</div>
<div style="position:absolute;left:814px;top:110px;width:96px;height:22px;line-height:22px;white-space:nowrap;font-size:13px;color:#222;text-align:right;">37</div>
<div style="position:absolute;left:0px;top:132px;width:21px;height:22px;background:#fff;"></div>
<div style="position:absolute;left:0px;top:132px;width:21px;height:22px;line-height:22px;white-space:nowrap;font-size:11px;color:#333;text-align:center;">7</div>
<div style="position:absolute;left:21px;top:132px;width:10px;height:22px;background:#173a66;"></div>
<div style="position:absolute;left:31px;top:132px;width:10px;height:22px;background:#1c4b84;"></div>
<div style="position:absolute;left:41px;top:132px;width:874px;height:22px;background:#2159a0;"></div>
<div style="position:absolute;left:42px;top:142px;width:10px;height:2px;background:#fff;"></div>
<div style="position:absolute;left:54px;top:137px;width:12px;height:12px;border:1.5px solid #fff;border-radius:2px;"></div>
<div style="position:absolute;left:76px;top:132px;width:76px;height:22px;overflow:hidden;"><div style="position:absolute;left:0px;top:0px;height:22px;line-height:22px;white-space:nowrap;font-size:12px;font-weight:bold;color:#fff;letter-spacing:-0.4px;">OP_syn.1.1.2</div></div>
<div style="position:absolute;left:159px;top:132px;height:22px;line-height:22px;white-space:nowrap;font-size:12px;font-weight:bold;color:#fff;letter-spacing:-0.15px;">Общестроительные работы</div>
<div style="position:absolute;left:445px;top:132px;width:134px;height:22px;line-height:22px;white-space:nowrap;font-size:12.7px;font-weight:bold;color:#fff;text-align:center;">06.05.2025 09:00</div>
<div style="position:absolute;left:579px;top:132px;width:135px;height:22px;line-height:22px;white-space:nowrap;font-size:12.7px;font-weight:bold;color:#fff;text-align:center;">06.08.2025 18:00</div>
<div style="position:absolute;left:714px;top:132px;width:96px;height:22px;line-height:22px;white-space:nowrap;font-size:12.7px;font-weight:bold;color:#fff;text-align:right;">75</div>
<div style="position:absolute;left:0px;top:154px;width:21px;height:22px;background:#fff;"></div>
<div style="position:absolute;left:0px;top:154px;width:21px;height:22px;line-height:22px;white-space:nowrap;font-size:11px;color:#333;text-align:center;">8</div>
<div style="position:absolute;left:21px;top:154px;width:10px;height:22px;background:#173a66;"></div>
<div style="position:absolute;left:31px;top:154px;width:10px;height:22px;background:#1c4b84;"></div>
<div style="position:absolute;left:41px;top:154px;width:10px;height:22px;background:#2159a0;"></div>
<div style="position:absolute;left:51px;top:154px;width:864px;height:22px;background:#2a6bbf;"></div>
<div style="position:absolute;left:52px;top:164px;width:10px;height:2px;background:#fff;"></div>
<div style="position:absolute;left:64px;top:159px;width:12px;height:12px;border:1.5px solid #fff;border-radius:2px;"></div>
<div style="position:absolute;left:86px;top:154px;width:66px;height:22px;overflow:hidden;"><div style="position:absolute;left:0px;top:0px;height:22px;line-height:22px;white-space:nowrap;font-size:12px;font-weight:bold;color:#fff;letter-spacing:-0.4px;">OP_syn.1.1.2.1</div></div>
<div style="position:absolute;left:159px;top:154px;height:22px;line-height:22px;white-space:nowrap;font-size:12px;font-weight:bold;color:#fff;letter-spacing:-0.15px;">Фундамент</div>
<div style="position:absolute;left:445px;top:154px;width:134px;height:22px;line-height:22px;white-space:nowrap;font-size:12.7px;font-weight:bold;color:#fff;text-align:center;">06.05.2025 09:00</div>
<div style="position:absolute;left:579px;top:154px;width:135px;height:22px;line-height:22px;white-space:nowrap;font-size:12.7px;font-weight:bold;color:#fff;text-align:center;">18.05.2025 18:00</div>
<div style="position:absolute;left:714px;top:154px;width:96px;height:22px;line-height:22px;white-space:nowrap;font-size:12.7px;font-weight:bold;color:#fff;text-align:right;">100</div>
<div style="position:absolute;left:0px;top:176px;width:21px;height:22px;background:#fff;"></div>
<div style="position:absolute;left:0px;top:176px;width:21px;height:22px;line-height:22px;white-space:nowrap;font-size:11px;color:#333;text-align:center;">9</div>
<div style="position:absolute;left:21px;top:176px;width:10px;height:22px;background:#173a66;"></div>
<div style="position:absolute;left:31px;top:176px;width:10px;height:22px;background:#1c4b84;"></div>
<div style="position:absolute;left:41px;top:176px;width:10px;height:22px;background:#2159a0;"></div>
<div style="position:absolute;left:51px;top:176px;width:10px;height:22px;background:#2a6bbf;"></div>
<div style="position:absolute;left:61px;top:176px;width:853px;height:22px;background:#fff;"></div>
<div style="position:absolute;left:61px;top:197px;width:853px;height:1px;border-top:1px dashed #c9c9cf;"></div>
<div style="position:absolute;left:154px;top:176px;width:1px;height:22px;border-left:1px dashed #c9c9cf;"></div>
<div style="position:absolute;left:445px;top:176px;width:1px;height:22px;border-left:1px dashed #c9c9cf;"></div>
<div style="position:absolute;left:579px;top:176px;width:1px;height:22px;border-left:1px dashed #c9c9cf;"></div>
<div style="position:absolute;left:714px;top:176px;width:1px;height:22px;border-left:1px dashed #c9c9cf;"></div>
<div style="position:absolute;left:814px;top:176px;width:1px;height:22px;border-left:1px dashed #c9c9cf;"></div>
<div style="position:absolute;left:914px;top:176px;width:1px;height:22px;border-left:1px dashed #c9c9cf;"></div>
<div style="position:absolute;left:64px;top:181px;width:12px;height:12px;border:1.5px solid #222;border-radius:2px;background:#fff;"></div>
<div style="position:absolute;left:86px;top:176px;height:22px;line-height:22px;white-space:nowrap;font-size:13px;color:#222;letter-spacing:-0.35px;">02.01.01</div>
<div style="position:absolute;left:159px;top:176px;width:282px;height:22px;overflow:hidden;"><div style="position:absolute;left:0px;top:0px;height:22px;line-height:22px;white-space:nowrap;font-size:13px;color:#222;">Устройство буронабивных свай захватка 1</div></div>
<div style="position:absolute;left:445px;top:176px;width:134px;height:22px;line-height:22px;white-space:nowrap;font-size:13px;color:#222;text-align:center;">06.05.2025 09:00</div>
<div style="position:absolute;left:579px;top:176px;width:135px;height:22px;line-height:22px;white-space:nowrap;font-size:13px;color:#222;text-align:center;">07.05.2025 18:00</div>
<div style="position:absolute;left:714px;top:176px;width:96px;height:22px;line-height:22px;white-space:nowrap;font-size:13px;color:#222;text-align:right;">55</div>
<div style="position:absolute;left:814px;top:176px;width:96px;height:22px;line-height:22px;white-space:nowrap;font-size:13px;color:#222;text-align:right;">4</div>
<div style="position:absolute;left:0px;top:198px;width:21px;height:22px;background:#fff;"></div>
<div style="position:absolute;left:0px;top:198px;width:21px;height:22px;line-height:22px;white-space:nowrap;font-size:11px;color:#333;text-align:center;">10</div>
<div style="position:absolute;left:21px;top:198px;width:10px;height:22px;background:#173a66;"></div>
<div style="position:absolute;left:31px;top:198px;width:10px;height:22px;background:#1c4b84;"></div>
<div style="position:absolute;left:41px;top:198px;width:10px;height:22px;background:#2159a0;"></div>
<div style="position:absolute;left:51px;top:198px;width:10px;height:22px;background:#2a6bbf;"></div>
<div style="position:absolute;left:61px;top:198px;width:853px;height:22px;background:#fff;"></div>
<div style="position:absolute;left:61px;top:219px;width:853px;height:1px;border-top:1px dashed #c9c9cf;"></div>
<div style="position:absolute;left:154px;top:198px;width:1px;height:22px;border-left:1px dashed #c9c9cf;"></div>
<div style="position:absolute;left:445px;top:198px;width:1px;height:22px;border-left:1px dashed #c9c9cf;"></div>
<div style="position:absolute;left:579px;top:198px;width:1px;height:22px;border-left:1px dashed #c9c9cf;"></div>
<div style="position:absolute;left:714px;top:198px;width:1px;height:22px;border-left:1px dashed #c9c9cf;"></div>
<div style="position:absolute;left:814px;top:198px;width:1px;height:22px;border-left:1px dashed #c9c9cf;"></div>
<div style="position:absolute;left:914px;top:198px;width:1px;height:22px;border-left:1px dashed #c9c9cf;"></div>
<div style="position:absolute;left:64px;top:203px;width:12px;height:12px;border:1.5px solid #222;border-radius:2px;background:#fff;"></div>
<div style="position:absolute;left:86px;top:198px;height:22px;line-height:22px;white-space:nowrap;font-size:13px;color:#222;letter-spacing:-0.35px;">02.01.02</div>
<div style="position:absolute;left:159px;top:198px;width:282px;height:22px;overflow:hidden;"><div style="position:absolute;left:0px;top:0px;height:22px;line-height:22px;white-space:nowrap;font-size:13px;color:#222;">Устройство буронабивных свай захватка 2</div></div>
<div style="position:absolute;left:445px;top:198px;width:134px;height:22px;line-height:22px;white-space:nowrap;font-size:13px;color:#222;text-align:center;">08.05.2025 09:00</div>
<div style="position:absolute;left:579px;top:198px;width:135px;height:22px;line-height:22px;white-space:nowrap;font-size:13px;color:#222;text-align:center;">09.05.2025 18:00</div>
<div style="position:absolute;left:714px;top:198px;width:96px;height:22px;line-height:22px;white-space:nowrap;font-size:13px;color:#222;text-align:right;">23</div>
<div style="position:absolute;left:814px;top:198px;width:96px;height:22px;line-height:22px;white-space:nowrap;font-size:13px;color:#222;text-align:right;">4</div>
<div style="position:absolute;left:0px;top:220px;width:21px;height:22px;background:#fff;"></div>
<div style="position:absolute;left:0px;top:220px;width:21px;height:22px;line-height:22px;white-space:nowrap;font-size:11px;color:#333;text-align:center;">11</div>
<div style="position:absolute;left:21px;top:220px;width:10px;height:22px;background:#173a66;"></div>
<div style="position:absolute;left:31px;top:220px;width:10px;height:22px;background:#1c4b84;"></div>
<div style="position:absolute;left:41px;top:220px;width:10px;height:22px;background:#2159a0;"></div>
<div style="position:absolute;left:51px;top:220px;width:10px;height:22px;background:#2a6bbf;"></div>
<div style="position:absolute;left:61px;top:220px;width:853px;height:22px;background:#fff;"></div>
<div style="position:absolute;left:61px;top:241px;width:853px;height:1px;border-top:1px dashed #c9c9cf;"></div>
<div style="position:absolute;left:154px;top:220px;width:1px;height:22px;border-left:1px dashed #c9c9cf;"></div>
<div style="position:absolute;left:445px;top:220px;width:1px;height:22px;border-left:1px dashed #c9c9cf;"></div>
<div style="position:absolute;left:579px;top:220px;width:1px;height:22px;border-left:1px dashed #c9c9cf;"></div>
<div style="position:absolute;left:714px;top:220px;width:1px;height:22px;border-left:1px dashed #c9c9cf;"></div>
<div style="position:absolute;left:814px;top:220px;width:1px;height:22px;border-left:1px dashed #c9c9cf;"></div>
<div style="position:absolute;left:914px;top:220px;width:1px;height:22px;border-left:1px dashed #c9c9cf;"></div>
<div style="position:absolute;left:64px;top:225px;width:12px;height:12px;border:1.5px solid #222;border-radius:2px;background:#fff;"></div>
<div style="position:absolute;left:86px;top:220px;height:22px;line-height:22px;white-space:nowrap;font-size:13px;color:#222;letter-spacing:-0.35px;">02.01.03</div>
<div style="position:absolute;left:159px;top:220px;width:282px;height:22px;overflow:hidden;"><div style="position:absolute;left:0px;top:0px;height:22px;line-height:22px;white-space:nowrap;font-size:13px;color:#222;">Устройство буронабивных свай захватка 3</div></div>
<div style="position:absolute;left:445px;top:220px;width:134px;height:22px;line-height:22px;white-space:nowrap;font-size:13px;color:#222;text-align:center;">10.05.2025 09:00</div>
<div style="position:absolute;left:579px;top:220px;width:135px;height:22px;line-height:22px;white-space:nowrap;font-size:13px;color:#222;text-align:center;">11.05.2025 18:00</div>
<div style="position:absolute;left:714px;top:220px;width:96px;height:22px;line-height:22px;white-space:nowrap;font-size:13px;color:#222;text-align:right;">87</div>
<div style="position:absolute;left:814px;top:220px;width:96px;height:22px;line-height:22px;white-space:nowrap;font-size:13px;color:#222;text-align:right;">4</div>
<div style="position:absolute;left:0px;top:242px;width:21px;height:22px;background:#fff;"></div>
<div style="position:absolute;left:0px;top:242px;width:21px;height:22px;line-height:22px;white-space:nowrap;font-size:11px;color:#333;text-align:center;">12</div>
<div style="position:absolute;left:21px;top:242px;width:10px;height:22px;background:#173a66;"></div>
<div style="position:absolute;left:31px;top:242px;width:10px;height:22px;background:#1c4b84;"></div>
<div style="position:absolute;left:41px;top:242px;width:10px;height:22px;background:#2159a0;"></div>
<div style="position:absolute;left:51px;top:242px;width:10px;height:22px;background:#2a6bbf;"></div>
<div style="position:absolute;left:61px;top:242px;width:853px;height:22px;background:#fff;"></div>
<div style="position:absolute;left:61px;top:263px;width:853px;height:1px;border-top:1px dashed #c9c9cf;"></div>
<div style="position:absolute;left:154px;top:242px;width:1px;height:22px;border-left:1px dashed #c9c9cf;"></div>
<div style="position:absolute;left:445px;top:242px;width:1px;height:22px;border-left:1px dashed #c9c9cf;"></div>
<div style="position:absolute;left:579px;top:242px;width:1px;height:22px;border-left:1px dashed #c9c9cf;"></div>
<div style="position:absolute;left:714px;top:242px;width:1px;height:22px;border-left:1px dashed #c9c9cf;"></div>
<div style="position:absolute;left:814px;top:242px;width:1px;height:22px;border-left:1px dashed #c9c9cf;"></div>
<div style="position:absolute;left:914px;top:242px;width:1px;height:22px;border-left:1px dashed #c9c9cf;"></div>
<div style="position:absolute;left:64px;top:247px;width:12px;height:12px;border:1.5px solid #222;border-radius:2px;background:#fff;"></div>
<div style="position:absolute;left:86px;top:242px;height:22px;line-height:22px;white-space:nowrap;font-size:13px;color:#222;letter-spacing:-0.35px;">02.01.04</div>
<div style="position:absolute;left:159px;top:242px;width:282px;height:22px;overflow:hidden;"><div style="position:absolute;left:0px;top:0px;height:22px;line-height:22px;white-space:nowrap;font-size:13px;color:#222;">Устройство буронабивных свай захватка 4</div></div>
<div style="position:absolute;left:445px;top:242px;width:134px;height:22px;line-height:22px;white-space:nowrap;font-size:13px;color:#222;text-align:center;">12.05.2025 09:00</div>
<div style="position:absolute;left:579px;top:242px;width:135px;height:22px;line-height:22px;white-space:nowrap;font-size:13px;color:#222;text-align:center;">13.05.2025 18:00</div>
<div style="position:absolute;left:714px;top:242px;width:96px;height:22px;line-height:22px;white-space:nowrap;font-size:13px;color:#222;text-align:right;">61</div>
<div style="position:absolute;left:814px;top:242px;width:96px;height:22px;line-height:22px;white-space:nowrap;font-size:13px;color:#222;text-align:right;">4</div>
<div style="position:absolute;left:0px;top:264px;width:21px;height:22px;background:#fff;"></div>
<div style="position:absolute;left:0px;top:264px;width:21px;height:22px;line-height:22px;white-space:nowrap;font-size:11px;color:#333;text-align:center;">13</div>
<div style="position:absolute;left:21px;top:264px;width:10px;height:22px;background:#173a66;"></div>
<div style="position:absolute;left:31px;top:264px;width:10px;height:22px;background:#1c4b84;"></div>
<div style="position:absolute;left:41px;top:264px;width:10px;height:22px;background:#2159a0;"></div>
<div style="position:absolute;left:51px;top:264px;width:10px;height:22px;background:#2a6bbf;"></div>
<div style="position:absolute;left:61px;top:264px;width:853px;height:22px;background:#fff;"></div>
<div style="position:absolute;left:61px;top:285px;width:853px;height:1px;border-top:1px dashed #c9c9cf;"></div>
<div style="position:absolute;left:154px;top:264px;width:1px;height:22px;border-left:1px dashed #c9c9cf;"></div>
<div style="position:absolute;left:445px;top:264px;width:1px;height:22px;border-left:1px dashed #c9c9cf;"></div>
<div style="position:absolute;left:579px;top:264px;width:1px;height:22px;border-left:1px dashed #c9c9cf;"></div>
<div style="position:absolute;left:714px;top:264px;width:1px;height:22px;border-left:1px dashed #c9c9cf;"></div>
<div style="position:absolute;left:814px;top:264px;width:1px;height:22px;border-left:1px dashed #c9c9cf;"></div>
<div style="position:absolute;left:914px;top:264px;width:1px;height:22px;border-left:1px dashed #c9c9cf;"></div>
<div style="position:absolute;left:64px;top:269px;width:12px;height:12px;border:1.5px solid #222;border-radius:2px;background:#fff;"></div>
<div style="position:absolute;left:86px;top:264px;height:22px;line-height:22px;white-space:nowrap;font-size:13px;color:#222;letter-spacing:-0.35px;">02.01.05</div>
<div style="position:absolute;left:159px;top:264px;width:282px;height:22px;overflow:hidden;"><div style="position:absolute;left:0px;top:0px;height:22px;line-height:22px;white-space:nowrap;font-size:13px;color:#222;">Устройство фундаментной плиты</div></div>
<div style="position:absolute;left:445px;top:264px;width:134px;height:22px;line-height:22px;white-space:nowrap;font-size:13px;color:#222;text-align:center;">14.05.2025 09:00</div>
<div style="position:absolute;left:579px;top:264px;width:135px;height:22px;line-height:22px;white-space:nowrap;font-size:13px;color:#222;text-align:center;">18.05.2025 18:00</div>
<div style="position:absolute;left:714px;top:264px;width:96px;height:22px;line-height:22px;white-space:nowrap;font-size:13px;color:#222;text-align:right;">12</div>
<div style="position:absolute;left:814px;top:264px;width:96px;height:22px;line-height:22px;white-space:nowrap;font-size:13px;color:#222;text-align:right;">55</div>
<div style="position:absolute;left:0px;top:286px;width:21px;height:22px;background:#fff;"></div>
<div style="position:absolute;left:0px;top:286px;width:21px;height:22px;line-height:22px;white-space:nowrap;font-size:11px;color:#333;text-align:center;">14</div>
<div style="position:absolute;left:21px;top:286px;width:10px;height:22px;background:#173a66;"></div>
<div style="position:absolute;left:31px;top:286px;width:10px;height:22px;background:#1c4b84;"></div>
<div style="position:absolute;left:41px;top:286px;width:10px;height:22px;background:#2159a0;"></div>
<div style="position:absolute;left:51px;top:286px;width:864px;height:22px;background:#2a6bbf;"></div>
<div style="position:absolute;left:52px;top:296px;width:10px;height:2px;background:#fff;"></div>
<div style="position:absolute;left:64px;top:291px;width:12px;height:12px;border:1.5px solid #fff;border-radius:2px;"></div>
<div style="position:absolute;left:86px;top:286px;width:66px;height:22px;overflow:hidden;"><div style="position:absolute;left:0px;top:0px;height:22px;line-height:22px;white-space:nowrap;font-size:12px;font-weight:bold;color:#fff;letter-spacing:-0.4px;">OP_syn.1.1.2.2</div></div>
<div style="position:absolute;left:159px;top:286px;height:22px;line-height:22px;white-space:nowrap;font-size:12px;font-weight:bold;color:#fff;letter-spacing:-0.15px;">Монолитные работы подземной части</div>
<div style="position:absolute;left:445px;top:286px;width:134px;height:22px;line-height:22px;white-space:nowrap;font-size:12.7px;font-weight:bold;color:#fff;text-align:center;">19.05.2025 09:00</div>
<div style="position:absolute;left:579px;top:286px;width:135px;height:22px;line-height:22px;white-space:nowrap;font-size:12.7px;font-weight:bold;color:#fff;text-align:center;">29.05.2025 18:00</div>
<div style="position:absolute;left:714px;top:286px;width:96px;height:22px;line-height:22px;white-space:nowrap;font-size:12.7px;font-weight:bold;color:#fff;text-align:right;">100</div>
<div style="position:absolute;left:0px;top:308px;width:21px;height:22px;background:#fff;"></div>
<div style="position:absolute;left:0px;top:308px;width:21px;height:22px;line-height:22px;white-space:nowrap;font-size:11px;color:#333;text-align:center;">15</div>
<div style="position:absolute;left:21px;top:308px;width:10px;height:22px;background:#173a66;"></div>
<div style="position:absolute;left:31px;top:308px;width:10px;height:22px;background:#1c4b84;"></div>
<div style="position:absolute;left:41px;top:308px;width:10px;height:22px;background:#2159a0;"></div>
<div style="position:absolute;left:51px;top:308px;width:10px;height:22px;background:#2a6bbf;"></div>
<div style="position:absolute;left:61px;top:308px;width:853px;height:22px;background:#fff;"></div>
<div style="position:absolute;left:61px;top:329px;width:853px;height:1px;border-top:1px dashed #c9c9cf;"></div>
<div style="position:absolute;left:154px;top:308px;width:1px;height:22px;border-left:1px dashed #c9c9cf;"></div>
<div style="position:absolute;left:445px;top:308px;width:1px;height:22px;border-left:1px dashed #c9c9cf;"></div>
<div style="position:absolute;left:579px;top:308px;width:1px;height:22px;border-left:1px dashed #c9c9cf;"></div>
<div style="position:absolute;left:714px;top:308px;width:1px;height:22px;border-left:1px dashed #c9c9cf;"></div>
<div style="position:absolute;left:814px;top:308px;width:1px;height:22px;border-left:1px dashed #c9c9cf;"></div>
<div style="position:absolute;left:914px;top:308px;width:1px;height:22px;border-left:1px dashed #c9c9cf;"></div>
<div style="position:absolute;left:64px;top:313px;width:12px;height:12px;border:1.5px solid #222;border-radius:2px;background:#fff;"></div>
<div style="position:absolute;left:86px;top:308px;height:22px;line-height:22px;white-space:nowrap;font-size:13px;color:#222;letter-spacing:-0.35px;">02.02.01</div>
<div style="position:absolute;left:159px;top:308px;width:282px;height:22px;overflow:hidden;"><div style="position:absolute;left:0px;top:0px;height:22px;line-height:22px;white-space:nowrap;font-size:13px;color:#222;">Устройство монолитных стен цокольного этажа</div></div>
<div style="position:absolute;left:445px;top:308px;width:134px;height:22px;line-height:22px;white-space:nowrap;font-size:13px;color:#222;text-align:center;">19.05.2025 09:00</div>
<div style="position:absolute;left:579px;top:308px;width:135px;height:22px;line-height:22px;white-space:nowrap;font-size:13px;color:#222;text-align:center;">20.05.2025 18:00</div>
<div style="position:absolute;left:714px;top:308px;width:96px;height:22px;line-height:22px;white-space:nowrap;font-size:13px;color:#222;text-align:right;">44</div>
<div style="position:absolute;left:814px;top:308px;width:96px;height:22px;line-height:22px;white-space:nowrap;font-size:13px;color:#222;text-align:right;">28</div>
<div style="position:absolute;left:0px;top:330px;width:21px;height:22px;background:#fff;"></div>
<div style="position:absolute;left:0px;top:330px;width:21px;height:22px;line-height:22px;white-space:nowrap;font-size:11px;color:#333;text-align:center;">16</div>
<div style="position:absolute;left:21px;top:330px;width:10px;height:22px;background:#173a66;"></div>
<div style="position:absolute;left:31px;top:330px;width:10px;height:22px;background:#1c4b84;"></div>
<div style="position:absolute;left:41px;top:330px;width:10px;height:22px;background:#2159a0;"></div>
<div style="position:absolute;left:51px;top:330px;width:10px;height:22px;background:#2a6bbf;"></div>
<div style="position:absolute;left:61px;top:330px;width:853px;height:22px;background:#fff;"></div>
<div style="position:absolute;left:61px;top:351px;width:853px;height:1px;border-top:1px dashed #c9c9cf;"></div>
<div style="position:absolute;left:154px;top:330px;width:1px;height:22px;border-left:1px dashed #c9c9cf;"></div>
<div style="position:absolute;left:445px;top:330px;width:1px;height:22px;border-left:1px dashed #c9c9cf;"></div>
<div style="position:absolute;left:579px;top:330px;width:1px;height:22px;border-left:1px dashed #c9c9cf;"></div>
<div style="position:absolute;left:714px;top:330px;width:1px;height:22px;border-left:1px dashed #c9c9cf;"></div>
<div style="position:absolute;left:814px;top:330px;width:1px;height:22px;border-left:1px dashed #c9c9cf;"></div>
<div style="position:absolute;left:914px;top:330px;width:1px;height:22px;border-left:1px dashed #c9c9cf;"></div>
<div style="position:absolute;left:64px;top:335px;width:12px;height:12px;border:1.5px solid #222;border-radius:2px;background:#fff;"></div>
<div style="position:absolute;left:86px;top:330px;height:22px;line-height:22px;white-space:nowrap;font-size:13px;color:#222;letter-spacing:-0.35px;">02.02.02</div>
<div style="position:absolute;left:159px;top:330px;width:282px;height:22px;overflow:hidden;"><div style="position:absolute;left:0px;top:0px;height:22px;line-height:22px;white-space:nowrap;font-size:13px;color:#222;">Устройство монолитного перекрытия цокольного этажа</div></div>
<div style="position:absolute;left:445px;top:330px;width:134px;height:22px;line-height:22px;white-space:nowrap;font-size:13px;color:#222;text-align:center;">21.05.2025 09:00</div>
<div style="position:absolute;left:579px;top:330px;width:135px;height:22px;line-height:22px;white-space:nowrap;font-size:13px;color:#222;text-align:center;">25.05.2025 18:00</div>
<div style="position:absolute;left:714px;top:330px;width:96px;height:22px;line-height:22px;white-space:nowrap;font-size:13px;color:#222;text-align:right;">24</div>
<div style="position:absolute;left:814px;top:330px;width:96px;height:22px;line-height:22px;white-space:nowrap;font-size:13px;color:#222;text-align:right;">30.7</div>
<div style="position:absolute;left:0px;top:352px;width:21px;height:22px;background:#fff;"></div>
<div style="position:absolute;left:0px;top:352px;width:21px;height:22px;line-height:22px;white-space:nowrap;font-size:11px;color:#333;text-align:center;">17</div>
<div style="position:absolute;left:21px;top:352px;width:10px;height:22px;background:#173a66;"></div>
<div style="position:absolute;left:31px;top:352px;width:10px;height:22px;background:#1c4b84;"></div>
<div style="position:absolute;left:41px;top:352px;width:10px;height:22px;background:#2159a0;"></div>
<div style="position:absolute;left:51px;top:352px;width:10px;height:22px;background:#2a6bbf;"></div>
<div style="position:absolute;left:61px;top:352px;width:853px;height:22px;background:#fff;"></div>
<div style="position:absolute;left:61px;top:373px;width:853px;height:1px;border-top:1px dashed #c9c9cf;"></div>
<div style="position:absolute;left:154px;top:352px;width:1px;height:22px;border-left:1px dashed #c9c9cf;"></div>
<div style="position:absolute;left:445px;top:352px;width:1px;height:22px;border-left:1px dashed #c9c9cf;"></div>
<div style="position:absolute;left:579px;top:352px;width:1px;height:22px;border-left:1px dashed #c9c9cf;"></div>
<div style="position:absolute;left:714px;top:352px;width:1px;height:22px;border-left:1px dashed #c9c9cf;"></div>
<div style="position:absolute;left:814px;top:352px;width:1px;height:22px;border-left:1px dashed #c9c9cf;"></div>
<div style="position:absolute;left:914px;top:352px;width:1px;height:22px;border-left:1px dashed #c9c9cf;"></div>
<div style="position:absolute;left:64px;top:357px;width:12px;height:12px;border:1.5px solid #222;border-radius:2px;background:#fff;"></div>
<div style="position:absolute;left:86px;top:352px;height:22px;line-height:22px;white-space:nowrap;font-size:13px;color:#222;letter-spacing:-0.35px;">02.02.03</div>
<div style="position:absolute;left:159px;top:352px;width:282px;height:22px;overflow:hidden;"><div style="position:absolute;left:0px;top:0px;height:22px;line-height:22px;white-space:nowrap;font-size:13px;color:#222;">Устройство монолитной входной лестницы</div></div>
<div style="position:absolute;left:445px;top:352px;width:134px;height:22px;line-height:22px;white-space:nowrap;font-size:13px;color:#222;text-align:center;">28.05.2025 09:00</div>
<div style="position:absolute;left:579px;top:352px;width:135px;height:22px;line-height:22px;white-space:nowrap;font-size:13px;color:#222;text-align:center;">29.05.2025 18:00</div>
<div style="position:absolute;left:714px;top:352px;width:96px;height:22px;line-height:22px;white-space:nowrap;font-size:13px;color:#222;text-align:right;">86</div>
<div style="position:absolute;left:814px;top:352px;width:96px;height:22px;line-height:22px;white-space:nowrap;font-size:13px;color:#222;text-align:right;">2.75</div>
<div style="position:absolute;left:0px;top:374px;width:21px;height:22px;background:#fff;"></div>
<div style="position:absolute;left:0px;top:374px;width:21px;height:22px;line-height:22px;white-space:nowrap;font-size:11px;color:#333;text-align:center;">18</div>
<div style="position:absolute;left:21px;top:374px;width:10px;height:22px;background:#173a66;"></div>
<div style="position:absolute;left:31px;top:374px;width:10px;height:22px;background:#1c4b84;"></div>
<div style="position:absolute;left:41px;top:374px;width:10px;height:22px;background:#2159a0;"></div>
<div style="position:absolute;left:51px;top:374px;width:864px;height:22px;background:#2a6bbf;"></div>
<div style="position:absolute;left:52px;top:384px;width:10px;height:2px;background:#fff;"></div>
<div style="position:absolute;left:64px;top:379px;width:12px;height:12px;border:1.5px solid #fff;border-radius:2px;"></div>
<div style="position:absolute;left:86px;top:374px;width:66px;height:22px;overflow:hidden;"><div style="position:absolute;left:0px;top:0px;height:22px;line-height:22px;white-space:nowrap;font-size:12px;font-weight:bold;color:#fff;letter-spacing:-0.4px;">OP_syn.1.1.2.3</div></div>
<div style="position:absolute;left:159px;top:374px;height:22px;line-height:22px;white-space:nowrap;font-size:12px;font-weight:bold;color:#fff;letter-spacing:-0.15px;">Монолитные работы надземной части</div>
<div style="position:absolute;left:445px;top:374px;width:134px;height:22px;line-height:22px;white-space:nowrap;font-size:12.7px;font-weight:bold;color:#fff;text-align:center;">26.05.2025 09:00</div>
<div style="position:absolute;left:579px;top:374px;width:135px;height:22px;line-height:22px;white-space:nowrap;font-size:12.7px;font-weight:bold;color:#fff;text-align:center;">21.06.2025 18:00</div>
<div style="position:absolute;left:714px;top:374px;width:96px;height:22px;line-height:22px;white-space:nowrap;font-size:12.7px;font-weight:bold;color:#fff;text-align:right;">100</div>
<div style="position:absolute;left:0px;top:396px;width:21px;height:22px;background:#fff;"></div>
<div style="position:absolute;left:0px;top:396px;width:21px;height:22px;line-height:22px;white-space:nowrap;font-size:11px;color:#333;text-align:center;">19</div>
<div style="position:absolute;left:21px;top:396px;width:10px;height:22px;background:#173a66;"></div>
<div style="position:absolute;left:31px;top:396px;width:10px;height:22px;background:#1c4b84;"></div>
<div style="position:absolute;left:41px;top:396px;width:10px;height:22px;background:#2159a0;"></div>
<div style="position:absolute;left:51px;top:396px;width:10px;height:22px;background:#2a6bbf;"></div>
<div style="position:absolute;left:61px;top:396px;width:853px;height:22px;background:#fff;"></div>
<div style="position:absolute;left:61px;top:417px;width:853px;height:1px;border-top:1px dashed #c9c9cf;"></div>
<div style="position:absolute;left:154px;top:396px;width:1px;height:22px;border-left:1px dashed #c9c9cf;"></div>
<div style="position:absolute;left:445px;top:396px;width:1px;height:22px;border-left:1px dashed #c9c9cf;"></div>
<div style="position:absolute;left:579px;top:396px;width:1px;height:22px;border-left:1px dashed #c9c9cf;"></div>
<div style="position:absolute;left:714px;top:396px;width:1px;height:22px;border-left:1px dashed #c9c9cf;"></div>
<div style="position:absolute;left:814px;top:396px;width:1px;height:22px;border-left:1px dashed #c9c9cf;"></div>
<div style="position:absolute;left:914px;top:396px;width:1px;height:22px;border-left:1px dashed #c9c9cf;"></div>
<div style="position:absolute;left:64px;top:401px;width:12px;height:12px;border:1.5px solid #222;border-radius:2px;background:#fff;"></div>
<div style="position:absolute;left:86px;top:396px;height:22px;line-height:22px;white-space:nowrap;font-size:13px;color:#222;letter-spacing:-0.35px;">02.03.01</div>
<div style="position:absolute;left:159px;top:396px;width:282px;height:22px;overflow:hidden;"><div style="position:absolute;left:0px;top:0px;height:22px;line-height:22px;white-space:nowrap;font-size:13px;color:#222;">Устройство наружных монолитных стен 1-го этажа</div></div>
<div style="position:absolute;left:445px;top:396px;width:134px;height:22px;line-height:22px;white-space:nowrap;font-size:13px;color:#222;text-align:center;">26.05.2025 09:00</div>
<div style="position:absolute;left:579px;top:396px;width:135px;height:22px;line-height:22px;white-space:nowrap;font-size:13px;color:#222;text-align:center;">27.05.2025 18:00</div>
<div style="position:absolute;left:714px;top:396px;width:96px;height:22px;line-height:22px;white-space:nowrap;font-size:13px;color:#222;text-align:right;">49</div>
<div style="position:absolute;left:814px;top:396px;width:96px;height:22px;line-height:22px;white-space:nowrap;font-size:13px;color:#222;text-align:right;">20</div>
<div style="position:absolute;left:0px;top:418px;width:21px;height:22px;background:#fff;"></div>
<div style="position:absolute;left:0px;top:418px;width:21px;height:22px;line-height:22px;white-space:nowrap;font-size:11px;color:#333;text-align:center;">20</div>
<div style="position:absolute;left:21px;top:418px;width:10px;height:22px;background:#173a66;"></div>
<div style="position:absolute;left:31px;top:418px;width:10px;height:22px;background:#1c4b84;"></div>
<div style="position:absolute;left:41px;top:418px;width:10px;height:22px;background:#2159a0;"></div>
<div style="position:absolute;left:51px;top:418px;width:10px;height:22px;background:#2a6bbf;"></div>
<div style="position:absolute;left:61px;top:418px;width:853px;height:22px;background:#fff;"></div>
<div style="position:absolute;left:61px;top:439px;width:853px;height:1px;border-top:1px dashed #c9c9cf;"></div>
<div style="position:absolute;left:154px;top:418px;width:1px;height:22px;border-left:1px dashed #c9c9cf;"></div>
<div style="position:absolute;left:445px;top:418px;width:1px;height:22px;border-left:1px dashed #c9c9cf;"></div>
<div style="position:absolute;left:579px;top:418px;width:1px;height:22px;border-left:1px dashed #c9c9cf;"></div>
<div style="position:absolute;left:714px;top:418px;width:1px;height:22px;border-left:1px dashed #c9c9cf;"></div>
<div style="position:absolute;left:814px;top:418px;width:1px;height:22px;border-left:1px dashed #c9c9cf;"></div>
<div style="position:absolute;left:914px;top:418px;width:1px;height:22px;border-left:1px dashed #c9c9cf;"></div>
<div style="position:absolute;left:64px;top:423px;width:12px;height:12px;border:1.5px solid #222;border-radius:2px;background:#fff;"></div>
<div style="position:absolute;left:86px;top:418px;height:22px;line-height:22px;white-space:nowrap;font-size:13px;color:#222;letter-spacing:-0.35px;">02.03.02</div>
<div style="position:absolute;left:159px;top:418px;width:282px;height:22px;overflow:hidden;"><div style="position:absolute;left:0px;top:0px;height:22px;line-height:22px;white-space:nowrap;font-size:13px;color:#222;">Устройство внутренних монолитных стен 1-го этажа</div></div>
<div style="position:absolute;left:445px;top:418px;width:134px;height:22px;line-height:22px;white-space:nowrap;font-size:13px;color:#222;text-align:center;">26.05.2025 09:00</div>
<div style="position:absolute;left:579px;top:418px;width:135px;height:22px;line-height:22px;white-space:nowrap;font-size:13px;color:#222;text-align:center;">27.05.2025 18:00</div>
<div style="position:absolute;left:714px;top:418px;width:96px;height:22px;line-height:22px;white-space:nowrap;font-size:13px;color:#222;text-align:right;">32</div>
<div style="position:absolute;left:814px;top:418px;width:96px;height:22px;line-height:22px;white-space:nowrap;font-size:13px;color:#222;text-align:right;">18</div>
<div style="position:absolute;left:0px;top:440px;width:21px;height:22px;background:#fff;"></div>
<div style="position:absolute;left:0px;top:440px;width:21px;height:22px;line-height:22px;white-space:nowrap;font-size:11px;color:#333;text-align:center;">21</div>
<div style="position:absolute;left:21px;top:440px;width:10px;height:22px;background:#173a66;"></div>
<div style="position:absolute;left:31px;top:440px;width:10px;height:22px;background:#1c4b84;"></div>
<div style="position:absolute;left:41px;top:440px;width:10px;height:22px;background:#2159a0;"></div>
<div style="position:absolute;left:51px;top:440px;width:10px;height:22px;background:#2a6bbf;"></div>
<div style="position:absolute;left:61px;top:440px;width:853px;height:22px;background:#fff;"></div>
<div style="position:absolute;left:61px;top:461px;width:853px;height:1px;border-top:1px dashed #c9c9cf;"></div>
<div style="position:absolute;left:154px;top:440px;width:1px;height:22px;border-left:1px dashed #c9c9cf;"></div>
<div style="position:absolute;left:445px;top:440px;width:1px;height:22px;border-left:1px dashed #c9c9cf;"></div>
<div style="position:absolute;left:579px;top:440px;width:1px;height:22px;border-left:1px dashed #c9c9cf;"></div>
<div style="position:absolute;left:714px;top:440px;width:1px;height:22px;border-left:1px dashed #c9c9cf;"></div>
<div style="position:absolute;left:814px;top:440px;width:1px;height:22px;border-left:1px dashed #c9c9cf;"></div>
<div style="position:absolute;left:914px;top:440px;width:1px;height:22px;border-left:1px dashed #c9c9cf;"></div>
<div style="position:absolute;left:64px;top:445px;width:12px;height:12px;border:1.5px solid #222;border-radius:2px;background:#fff;"></div>
<div style="position:absolute;left:86px;top:440px;height:22px;line-height:22px;white-space:nowrap;font-size:13px;color:#222;letter-spacing:-0.35px;">02.03.03</div>
<div style="position:absolute;left:159px;top:440px;width:282px;height:22px;overflow:hidden;"><div style="position:absolute;left:0px;top:0px;height:22px;line-height:22px;white-space:nowrap;font-size:13px;color:#222;">Устройство монолитной лестницы 1-го этажа</div></div>
<div style="position:absolute;left:445px;top:440px;width:134px;height:22px;line-height:22px;white-space:nowrap;font-size:13px;color:#222;text-align:center;">28.05.2025 09:00</div>
<div style="position:absolute;left:579px;top:440px;width:135px;height:22px;line-height:22px;white-space:nowrap;font-size:13px;color:#222;text-align:center;">02.06.2025 18:00</div>
<div style="position:absolute;left:714px;top:440px;width:96px;height:22px;line-height:22px;white-space:nowrap;font-size:13px;color:#222;text-align:right;">73</div>
<div style="position:absolute;left:814px;top:440px;width:96px;height:22px;line-height:22px;white-space:nowrap;font-size:13px;color:#222;text-align:right;">8</div>
<div style="position:absolute;left:0px;top:462px;width:21px;height:22px;background:#fff;"></div>
<div style="position:absolute;left:0px;top:462px;width:21px;height:22px;line-height:22px;white-space:nowrap;font-size:11px;color:#333;text-align:center;">22</div>
<div style="position:absolute;left:21px;top:462px;width:10px;height:22px;background:#173a66;"></div>
<div style="position:absolute;left:31px;top:462px;width:10px;height:22px;background:#1c4b84;"></div>
<div style="position:absolute;left:41px;top:462px;width:10px;height:22px;background:#2159a0;"></div>
<div style="position:absolute;left:51px;top:462px;width:10px;height:22px;background:#2a6bbf;"></div>
<div style="position:absolute;left:61px;top:462px;width:853px;height:22px;background:#fff;"></div>
<div style="position:absolute;left:61px;top:483px;width:853px;height:1px;border-top:1px dashed #c9c9cf;"></div>
<div style="position:absolute;left:154px;top:462px;width:1px;height:22px;border-left:1px dashed #c9c9cf;"></div>
<div style="position:absolute;left:445px;top:462px;width:1px;height:22px;border-left:1px dashed #c9c9cf;"></div>
<div style="position:absolute;left:579px;top:462px;width:1px;height:22px;border-left:1px dashed #c9c9cf;"></div>
<div style="position:absolute;left:714px;top:462px;width:1px;height:22px;border-left:1px dashed #c9c9cf;"></div>
<div style="position:absolute;left:814px;top:462px;width:1px;height:22px;border-left:1px dashed #c9c9cf;"></div>
<div style="position:absolute;left:914px;top:462px;width:1px;height:22px;border-left:1px dashed #c9c9cf;"></div>
<div style="position:absolute;left:64px;top:467px;width:12px;height:12px;border:1.5px solid #222;border-radius:2px;background:#fff;"></div>
<div style="position:absolute;left:86px;top:462px;height:22px;line-height:22px;white-space:nowrap;font-size:13px;color:#222;letter-spacing:-0.35px;">02.03.04</div>
<div style="position:absolute;left:159px;top:462px;width:282px;height:22px;overflow:hidden;"><div style="position:absolute;left:0px;top:0px;height:22px;line-height:22px;white-space:nowrap;font-size:13px;color:#222;">Устройство монолитного перекрытия 1-го этажа</div></div>
<div style="position:absolute;left:445px;top:462px;width:134px;height:22px;line-height:22px;white-space:nowrap;font-size:13px;color:#222;text-align:center;">03.06.2025 09:00</div>
<div style="position:absolute;left:579px;top:462px;width:135px;height:22px;line-height:22px;white-space:nowrap;font-size:13px;color:#222;text-align:center;">05.06.2025 18:00</div>
<div style="position:absolute;left:714px;top:462px;width:96px;height:22px;line-height:22px;white-space:nowrap;font-size:13px;color:#222;text-align:right;">21</div>
<div style="position:absolute;left:814px;top:462px;width:96px;height:22px;line-height:22px;white-space:nowrap;font-size:13px;color:#222;text-align:right;">28</div>
</div>
<div style="position:absolute;left:1007px;top:90px;width:6px;height:528px;background:#f2f2f5;"></div>
<div style="position:absolute;left:1007px;top:90px;width:6px;height:63px;background:#d8d8dc;border-radius:0 0 3px 3px;"></div>
<div style="position:absolute;left:1013px;top:45px;width:6px;height:580px;background:#b5b5bc;"></div>
<div style="position:absolute;left:45px;top:618px;width:1872px;height:6px;background:#b5b5bc;"></div>
<div style="position:absolute;left:1019px;top:89px;width:898px;height:530px;background:#fff;"></div>
<div style="position:absolute;left:1019px;top:89px;width:898px;height:1px;background:#d0d0d4;"></div>
<div style="position:absolute;left:1019px;top:113px;width:898px;height:1px;background:#d6d6da;"></div>
<div style="position:absolute;left:1019px;top:139px;width:898px;height:1px;background:#d6d6da;"></div>
<div style="position:absolute;left:1686px;top:89px;width:1px;height:50px;background:#d6d6da;"></div>
<div style="position:absolute;left:1019px;top:89px;width:667px;height:23px;line-height:23px;white-space:nowrap;font-size:13px;color:#222;text-align:center;">2025</div>
<div style="position:absolute;left:1689px;top:89px;width:231px;height:23px;line-height:23px;white-space:nowrap;font-size:13px;color:#222;text-align:center;">2026</div>
<div style="position:absolute;left:1016.5px;top:115px;width:49px;height:25px;line-height:25px;white-space:nowrap;font-size:13px;color:#222;text-align:center;">февр.</div>
<div style="position:absolute;left:1068px;top:114px;width:1px;height:25px;background:#d6d6da;"></div>
<div style="position:absolute;left:1065.5px;top:115px;width:63px;height:25px;line-height:25px;white-space:nowrap;font-size:13px;color:#222;text-align:center;">март</div>
<div style="position:absolute;left:1131px;top:114px;width:1px;height:25px;background:#d6d6da;"></div>
<div style="position:absolute;left:1128.5px;top:115px;width:60px;height:25px;line-height:25px;white-space:nowrap;font-size:13px;color:#222;text-align:center;">апр.</div>
<div style="position:absolute;left:1191px;top:114px;width:1px;height:25px;background:#d6d6da;"></div>
<div style="position:absolute;left:1188.5px;top:115px;width:63px;height:25px;line-height:25px;white-space:nowrap;font-size:13px;color:#222;text-align:center;">май</div>
<div style="position:absolute;left:1254px;top:114px;width:1px;height:25px;background:#d6d6da;"></div>
<div style="position:absolute;left:1251.5px;top:115px;width:61px;height:25px;line-height:25px;white-space:nowrap;font-size:13px;color:#222;text-align:center;">июнь</div>
<div style="position:absolute;left:1315px;top:114px;width:1px;height:25px;background:#d6d6da;"></div>
<div style="position:absolute;left:1312.5px;top:115px;width:62px;height:25px;line-height:25px;white-space:nowrap;font-size:13px;color:#222;text-align:center;">июль</div>
<div style="position:absolute;left:1377px;top:114px;width:1px;height:25px;background:#d6d6da;"></div>
<div style="position:absolute;left:1374.5px;top:115px;width:63px;height:25px;line-height:25px;white-space:nowrap;font-size:13px;color:#222;text-align:center;">авг.</div>
<div style="position:absolute;left:1440px;top:114px;width:1px;height:25px;background:#d6d6da;"></div>
<div style="position:absolute;left:1437.5px;top:115px;width:60px;height:25px;line-height:25px;white-space:nowrap;font-size:13px;color:#222;text-align:center;">сент.</div>
<div style="position:absolute;left:1500px;top:114px;width:1px;height:25px;background:#d6d6da;"></div>
<div style="position:absolute;left:1497.5px;top:115px;width:63px;height:25px;line-height:25px;white-space:nowrap;font-size:13px;color:#222;text-align:center;">окт.</div>
<div style="position:absolute;left:1563px;top:114px;width:1px;height:25px;background:#d6d6da;"></div>
<div style="position:absolute;left:1560.5px;top:115px;width:61px;height:25px;line-height:25px;white-space:nowrap;font-size:13px;color:#222;text-align:center;">нояб.</div>
<div style="position:absolute;left:1624px;top:114px;width:1px;height:25px;background:#d6d6da;"></div>
<div style="position:absolute;left:1621.5px;top:115px;width:62px;height:25px;line-height:25px;white-space:nowrap;font-size:13px;color:#222;text-align:center;">дек.</div>
<div style="position:absolute;left:1686px;top:114px;width:1px;height:25px;background:#d6d6da;"></div>
<div style="position:absolute;left:1683.5px;top:115px;width:63px;height:25px;line-height:25px;white-space:nowrap;font-size:13px;color:#222;text-align:center;">янв.</div>
<div style="position:absolute;left:1749px;top:114px;width:1px;height:25px;background:#d6d6da;"></div>
<div style="position:absolute;left:1746.5px;top:115px;width:56px;height:25px;line-height:25px;white-space:nowrap;font-size:13px;color:#222;text-align:center;">февр.</div>
<div style="position:absolute;left:1805px;top:114px;width:1px;height:25px;background:#d6d6da;"></div>
<div style="position:absolute;left:1802.5px;top:115px;width:63px;height:25px;line-height:25px;white-space:nowrap;font-size:13px;color:#222;text-align:center;">март</div>
<div style="position:absolute;left:1868px;top:114px;width:1px;height:25px;background:#d6d6da;"></div>
<div style="position:absolute;left:1865.5px;top:115px;width:49px;height:25px;line-height:25px;white-space:nowrap;font-size:13px;color:#222;text-align:center;">апр.</div>
<svg style="position:absolute;left:0;top:0;width:1917px;height:905px;pointer-events:none" viewBox="0 0 1917 905"><rect x="1019" y="228" width="896" height="22" fill="#fffbd3"/><line x1="1019" y1="161.5" x2="1915" y2="161.5" stroke="#d4d4d8" stroke-width="1" stroke-dasharray="1.6 4.65"/><line x1="1019" y1="183.5" x2="1915" y2="183.5" stroke="#d4d4d8" stroke-width="1" stroke-dasharray="1.6 4.65"/><line x1="1019" y1="205.5" x2="1915" y2="205.5" stroke="#d4d4d8" stroke-width="1" stroke-dasharray="1.6 4.65"/><line x1="1019" y1="227.5" x2="1915" y2="227.5" stroke="#d4d4d8" stroke-width="1" stroke-dasharray="1.6 4.65"/><line x1="1019" y1="249.5" x2="1915" y2="249.5" stroke="#d4d4d8" stroke-width="1" stroke-dasharray="1.6 4.65"/><line x1="1019" y1="271.5" x2="1915" y2="271.5" stroke="#d4d4d8" stroke-width="1" stroke-dasharray="1.6 4.65"/><line x1="1019" y1="293.5" x2="1915" y2="293.5" stroke="#d4d4d8" stroke-width="1" stroke-dasharray="1.6 4.65"/><line x1="1019" y1="315.5" x2="1915" y2="315.5" stroke="#d4d4d8" stroke-width="1" stroke-dasharray="1.6 4.65"/><line x1="1019" y1="337.5" x2="1915" y2="337.5" stroke="#d4d4d8" stroke-width="1" stroke-dasharray="1.6 4.65"/><line x1="1019" y1="359.5" x2="1915" y2="359.5" stroke="#d4d4d8" stroke-width="1" stroke-dasharray="1.6 4.65"/><line x1="1019" y1="381.5" x2="1915" y2="381.5" stroke="#d4d4d8" stroke-width="1" stroke-dasharray="1.6 4.65"/><line x1="1019" y1="403.5" x2="1915" y2="403.5" stroke="#d4d4d8" stroke-width="1" stroke-dasharray="1.6 4.65"/><line x1="1019" y1="425.5" x2="1915" y2="425.5" stroke="#d4d4d8" stroke-width="1" stroke-dasharray="1.6 4.65"/><line x1="1019" y1="447.5" x2="1915" y2="447.5" stroke="#d4d4d8" stroke-width="1" stroke-dasharray="1.6 4.65"/><line x1="1019" y1="469.5" x2="1915" y2="469.5" stroke="#d4d4d8" stroke-width="1" stroke-dasharray="1.6 4.65"/><line x1="1019" y1="491.5" x2="1915" y2="491.5" stroke="#d4d4d8" stroke-width="1" stroke-dasharray="1.6 4.65"/><line x1="1019" y1="513.5" x2="1915" y2="513.5" stroke="#d4d4d8" stroke-width="1" stroke-dasharray="1.6 4.65"/><line x1="1019" y1="535.5" x2="1915" y2="535.5" stroke="#d4d4d8" stroke-width="1" stroke-dasharray="1.6 4.65"/><line x1="1019" y1="557.5" x2="1915" y2="557.5" stroke="#d4d4d8" stroke-width="1" stroke-dasharray="1.6 4.65"/><line x1="1019" y1="579.5" x2="1915" y2="579.5" stroke="#d4d4d8" stroke-width="1" stroke-dasharray="1.6 4.65"/><line x1="1019" y1="601.5" x2="1915" y2="601.5" stroke="#d4d4d8" stroke-width="1" stroke-dasharray="1.6 4.65"/></svg>
<div style="position:absolute;left:1019px;top:140px;width:894px;height:478px;overflow:hidden;">
<div style="position:absolute;left:754px;top:1.5px;height:22px;line-height:22px;white-space:nowrap;font-size:13px;color:#5f5f64;">Отель Речной</div>
<div style="position:absolute;left:754px;top:23.5px;height:22px;line-height:22px;white-space:nowrap;font-size:13px;color:#5f5f64;">Строительство отеля</div>
<div style="position:absolute;left:202px;top:45.5px;height:22px;line-height:22px;white-space:nowrap;font-size:12px;color:#505055;font-weight:bold;letter-spacing:-0.1px;">Земляные работы</div>
<div style="position:absolute;left:194px;top:67.5px;height:22px;line-height:22px;white-space:nowrap;font-size:13px;color:#5f5f64;">Вертикальная планировка территории</div>
<div style="position:absolute;left:198px;top:89.5px;height:22px;line-height:22px;white-space:nowrap;font-size:13px;color:#5f5f64;">Устройство котлована</div>
<div style="position:absolute;left:202px;top:111.5px;height:22px;line-height:22px;white-space:nowrap;font-size:13px;color:#5f5f64;">Устройство песчаного основания</div>
<div style="position:absolute;left:390px;top:133.5px;height:22px;line-height:22px;white-space:nowrap;font-size:12px;color:#505055;font-weight:bold;letter-spacing:-0.1px;">Общестроительные работы</div>
<div style="position:absolute;left:229px;top:155.5px;height:22px;line-height:22px;white-space:nowrap;font-size:12px;color:#505055;font-weight:bold;letter-spacing:-0.1px;">Фундамент</div>
<div style="position:absolute;left:206px;top:177.5px;height:22px;line-height:22px;white-space:nowrap;font-size:13px;color:#5f5f64;">Устройство буронабивных свай захватка 1</div>
<div style="position:absolute;left:210px;top:199.5px;height:22px;line-height:22px;white-space:nowrap;font-size:13px;color:#5f5f64;">Устройство буронабивных свай захватка 2</div>
<div style="position:absolute;left:215px;top:221.5px;height:22px;line-height:22px;white-space:nowrap;font-size:13px;color:#5f5f64;">Устройство буронабивных свай захватка 3</div>
<div style="position:absolute;left:219px;top:243.5px;height:22px;line-height:22px;white-space:nowrap;font-size:13px;color:#5f5f64;">Устройство буронабивных свай захватка 4</div>
<div style="position:absolute;left:229px;top:265.5px;height:22px;line-height:22px;white-space:nowrap;font-size:13px;color:#5f5f64;">Устройство фундаментной плиты</div>
<div style="position:absolute;left:251px;top:287.5px;height:22px;line-height:22px;white-space:nowrap;font-size:12px;color:#505055;font-weight:bold;letter-spacing:-0.1px;">Монолитные работы подземной части</div>
<div style="position:absolute;left:233px;top:309.5px;height:22px;line-height:22px;white-space:nowrap;font-size:13px;color:#5f5f64;">Устройство монолитных стен цокольного этажа</div>
<div style="position:absolute;left:243px;top:331.5px;height:22px;line-height:22px;white-space:nowrap;font-size:13px;color:#5f5f64;">Устройство монолитного перекрытия цокольного этажа</div>
<div style="position:absolute;left:251px;top:353.5px;height:22px;line-height:22px;white-space:nowrap;font-size:13px;color:#5f5f64;">Устройство монолитной входной лестницы</div>
<div style="position:absolute;left:297px;top:375.5px;height:22px;line-height:22px;white-space:nowrap;font-size:12px;color:#505055;font-weight:bold;letter-spacing:-0.1px;">Монолитные работы надземной части</div>
<div style="position:absolute;left:247px;top:397.5px;height:22px;line-height:22px;white-space:nowrap;font-size:13px;color:#5f5f64;">Устройство наружных монолитных стен 1-го этажа</div>
<div style="position:absolute;left:247px;top:419.5px;height:22px;line-height:22px;white-space:nowrap;font-size:13px;color:#5f5f64;">Устройство внутренних монолитных стен 1-го этажа</div>
<div style="position:absolute;left:259px;top:441.5px;height:22px;line-height:22px;white-space:nowrap;font-size:13px;color:#5f5f64;">Устройство монолитной лестницы 1-го этажа</div>
<div style="position:absolute;left:265px;top:463.5px;height:22px;line-height:22px;white-space:nowrap;font-size:13px;color:#5f5f64;">Устройство монолитного перекрытия 1-го этажа</div>
</div>
<svg style="position:absolute;left:0;top:0;width:1917px;height:905px;pointer-events:none" viewBox="0 0 1917 905"><defs><clipPath id="gc"><rect x="1019" y="140" width="898" height="478"/></clipPath></defs><g clip-path="url(#gc)"><path d="M1188.0175 143H1734.6799999999998V150.5L1730.6799999999998 146.5H1192.0175L1188.0175 150.5Z" fill="#a9a9a9"/><path d="M1188.0175 152H1752.1025V160L1748.1025 156H1192.0175L1188.0175 160Z" fill="#000"/><path d="M1188.0175 165H1734.6799999999998V172.5L1730.6799999999998 168.5H1192.0175L1188.0175 172.5Z" fill="#a9a9a9"/><path d="M1188.0175 174H1752.1025V182L1748.1025 178H1192.0175L1188.0175 182Z" fill="#000"/><path d="M1188.0175 187H1200.895V194.5L1196.895 190.5H1192.0175L1188.0175 194.5Z" fill="#a9a9a9"/><path d="M1188.0175 196H1200.895V204L1196.895 200H1192.0175L1188.0175 204Z" fill="#000"/><rect x="1187.7175" y="213" width="5.397500000000127" height="4" fill="#d4d4d4" stroke="#8a8a8a" stroke-width="1.3"/><rect x="1188.0175" y="219.5" width="4.797500000000127" height="7" fill="#000"/><rect x="1188.0175" y="219.5" width="1.5" height="7" fill="#1a73e8"/><rect x="1193.7775" y="235" width="3.3775000000001456" height="4" fill="#d4d4d4" stroke="#8a8a8a" stroke-width="1.3"/><rect x="1194.0774999999999" y="241.5" width="2.7775000000001455" height="7" fill="#1a73e8"/><rect x="1194.0774999999999" y="241.5" width="1.5" height="7" fill="#1a73e8"/><rect x="1197.8175" y="257" width="3.3774999999999182" height="4" fill="#d4d4d4" stroke="#8a8a8a" stroke-width="1.3"/><rect x="1198.1175" y="263.5" width="2.777499999999918" height="7" fill="#1a73e8"/><rect x="1198.1175" y="263.5" width="1.5" height="7" fill="#1a73e8"/><path d="M1202.1575 275H1378.655V282.5L1374.655 278.5H1206.1575L1202.1575 282.5Z" fill="#a9a9a9"/><path d="M1202.1575 284H1388.7549999999999V292L1384.7549999999999 288H1206.1575L1202.1575 292Z" fill="#000"/><path d="M1202.1575 297H1227.155V304.5L1223.155 300.5H1206.1575L1202.1575 304.5Z" fill="#a9a9a9"/><path d="M1202.1575 306H1227.155V314L1223.155 310H1206.1575L1202.1575 314Z" fill="#000"/><rect x="1201.8575" y="323" width="3.3774999999999182" height="4" fill="#d4d4d4" stroke="#8a8a8a" stroke-width="1.3"/><rect x="1202.1575" y="329.5" width="2.777499999999918" height="7" fill="#1a73e8"/><rect x="1202.1575" y="329.5" width="1.5" height="7" fill="#1a73e8"/><rect x="1205.8975" y="345" width="3.3774999999999182" height="4" fill="#d4d4d4" stroke="#8a8a8a" stroke-width="1.3"/><rect x="1206.1975" y="351.5" width="2.777499999999918" height="7" fill="#3cc38f"/><rect x="1206.1975" y="351.5" width="1.5" height="7" fill="#1a73e8"/><rect x="1209.9375" y="367" width="3.3774999999999182" height="4" fill="#d4d4d4" stroke="#8a8a8a" stroke-width="1.3"/><rect x="1210.2375" y="373.5" width="2.777499999999918" height="7" fill="#1a73e8"/><rect x="1210.2375" y="373.5" width="1.5" height="7" fill="#1a73e8"/><rect x="1213.9775" y="389" width="3.3775000000001456" height="4" fill="#d4d4d4" stroke="#8a8a8a" stroke-width="1.3"/><rect x="1214.2775" y="395.5" width="2.7775000000001455" height="7" fill="#1a73e8"/><rect x="1214.2775" y="395.5" width="1.5" height="7" fill="#1a73e8"/><rect x="1218.0175" y="411" width="9.43750000000009" height="4" fill="#d4d4d4" stroke="#8a8a8a" stroke-width="1.3"/><rect x="1218.3174999999999" y="417.5" width="8.837500000000091" height="7" fill="#3cc38f"/><rect x="1218.3174999999999" y="417.5" width="1.5" height="7" fill="#1a73e8"/><path d="M1228.4175 429H1249.375V436.5L1245.375 432.5H1232.4175L1228.4175 436.5Z" fill="#a9a9a9"/><path d="M1228.4175 438H1249.375V446L1245.375 442H1232.4175L1228.4175 446Z" fill="#000"/><rect x="1228.1175" y="455" width="3.3774999999999182" height="4" fill="#d4d4d4" stroke="#8a8a8a" stroke-width="1.3"/><rect x="1228.4175" y="461.5" width="2.777499999999918" height="7" fill="#3cc38f"/><rect x="1228.4175" y="461.5" width="1.5" height="7" fill="#1a73e8"/><rect x="1232.1575" y="477" width="9.437499999999863" height="4" fill="#d4d4d4" stroke="#8a8a8a" stroke-width="1.3"/><rect x="1232.4575" y="483.5" width="8.837499999999864" height="7" fill="#3cc38f"/><rect x="1232.4575" y="483.5" width="1.5" height="7" fill="#1a73e8"/><rect x="1246.2975" y="499" width="3.3775000000001456" height="4" fill="#d4d4d4" stroke="#8a8a8a" stroke-width="1.3"/><rect x="1246.5974999999999" y="505.5" width="2.7775000000001455" height="7" fill="#1a73e8"/><rect x="1246.5974999999999" y="505.5" width="1.5" height="7" fill="#1a73e8"/><path d="M1242.5575 517H1297.855V524.5L1293.855 520.5H1246.5575L1242.5575 524.5Z" fill="#a9a9a9"/><path d="M1242.5575 526H1295.835V534L1291.835 530H1246.5575L1242.5575 534Z" fill="#000"/><rect x="1242.2575" y="543" width="3.3775000000001456" height="4" fill="#d4d4d4" stroke="#8a8a8a" stroke-width="1.3"/><rect x="1242.5575" y="549.5" width="2.7775000000001455" height="7" fill="#1a73e8"/><rect x="1242.5575" y="549.5" width="1.5" height="7" fill="#1a73e8"/><rect x="1242.2575" y="565" width="3.3775000000001456" height="4" fill="#d4d4d4" stroke="#8a8a8a" stroke-width="1.3"/><rect x="1242.5575" y="571.5" width="2.7775000000001455" height="7" fill="#3cc38f"/><rect x="1242.5575" y="571.5" width="1.5" height="7" fill="#1a73e8"/><rect x="1246.2975" y="587" width="11.457500000000072" height="4" fill="#d4d4d4" stroke="#8a8a8a" stroke-width="1.3"/><rect x="1246.5974999999999" y="593.5" width="10.857500000000073" height="7" fill="#1a73e8"/><rect x="1246.5974999999999" y="593.5" width="1.5" height="7" fill="#1a73e8"/><rect x="1258.4175" y="609" width="5.3974999999999" height="4" fill="#d4d4d4" stroke="#8a8a8a" stroke-width="1.3"/><rect x="1258.7175" y="615.5" width="4.7974999999999" height="7" fill="#3cc38f"/><rect x="1258.7175" y="615.5" width="1.5" height="7" fill="#1a73e8"/><path d="M1192.8 226V230.5H1180.1V245H1187.1" fill="none" stroke="#000" stroke-width="1.6"/><path d="M1185.1 241L1194.1 245L1185.1 249Z" fill="#000"/><path d="M1196.9 248V252.5H1184.1V267H1191.1" fill="none" stroke="#000" stroke-width="1.6"/><path d="M1189.1 263L1198.1 267L1189.1 271Z" fill="#000"/><path d="M1200.9 270V274.5H1188.2V333H1195.2" fill="none" stroke="#000" stroke-width="1.6"/><path d="M1193.2 329L1202.2 333L1193.2 337Z" fill="#000"/><path d="M1204.9 336V340.5H1192.2V355H1199.2" fill="none" stroke="#000" stroke-width="1.6"/><path d="M1197.2 351L1206.2 355L1197.2 359Z" fill="#000"/><path d="M1209.0 358V362.5H1196.2V377H1203.2" fill="none" stroke="#000" stroke-width="1.6"/><path d="M1201.2 373L1210.2 377L1201.2 381Z" fill="#000"/><path d="M1213.0 380V384.5H1200.3V399H1207.3" fill="none" stroke="#000" stroke-width="1.6"/><path d="M1205.3 395L1214.3 399L1205.3 403Z" fill="#000"/><path d="M1217.1 402V406.5H1204.3V421H1211.3" fill="none" stroke="#000" stroke-width="1.6"/><path d="M1209.3 417L1218.3 421L1209.3 425Z" fill="#000"/><path d="M1227.2 424V428.5H1212.3V465H1221.4" fill="none" stroke="#000" stroke-width="1.6"/><path d="M1219.4 461L1228.4 465L1219.4 469Z" fill="#000"/><path d="M1231.2 468V472.5H1218.5V487H1225.5" fill="none" stroke="#000" stroke-width="1.6"/><path d="M1223.5 483L1232.5 487L1223.5 491Z" fill="#000"/><path d="M1241.3 490V494.5H1226.5V553H1235.6" fill="none" stroke="#000" stroke-width="1.6"/><path d="M1233.6 549L1242.6 553L1233.6 557Z" fill="#000"/><path d="M1245.3 556V560.5H1228.6V575H1235.6" fill="none" stroke="#000" stroke-width="1.6"/><path d="M1233.6 571L1242.6 575L1233.6 579Z" fill="#000"/><path d="M1245.3 578V582.5H1232.6V597H1239.6" fill="none" stroke="#000" stroke-width="1.6"/><path d="M1237.6 593L1246.6 597L1237.6 601Z" fill="#000"/><path d="M1257.5 600V604.5H1240.6V619H1251.7" fill="none" stroke="#000" stroke-width="1.6"/><path d="M1249.7 615L1258.7 619L1249.7 623Z" fill="#000"/><path d="M1245.8 549V535.5H1231.6V509H1239.6" fill="none" stroke="#000" stroke-width="1.6"/><path d="M1237.6 505L1246.6 509L1237.6 513Z" fill="#000"/><path d="M1250.4 509H1259.4" fill="none" stroke="#000" stroke-width="1.3"/><path d="M1257.4 505L1265.4 509L1257.4 513Z M1265.4 504V514" fill="#000" stroke="#000" stroke-width="1"/><line x1="1342.2" y1="142" x2="1342.2" y2="619" stroke="#ef476f" stroke-width="2" stroke-dasharray="5 3"/><path d="M1336.2 140H1348.2L1342.2 147Z" fill="#ef476f"/><line x1="1487.3" y1="142" x2="1487.3" y2="619" stroke="#2a7de1" stroke-width="2" stroke-dasharray="5 3"/><path d="M1481.3 140H1493.3L1487.3 147Z" fill="#2a7de1"/><text transform="translate(1346.2,141) rotate(90)" font-family="Liberation Sans" font-size="11.4" fill="#8a8a8f">Дата актуализации</text><text transform="translate(1491.3,141) rotate(90)" font-family="Liberation Sans" font-size="11.4" fill="#8a8a8f">Текущая дата</text></g></svg>
<div style="position:absolute;left:1915px;top:140px;width:2px;height:478px;background:#e6e6ea;"></div>
<div style="position:absolute;left:1915px;top:140px;width:2px;height:50px;background:#d0d0d4;"></div>
<div style="position:absolute;left:45px;top:624px;width:1872px;height:281px;background:#fff;"></div>
<div style="position:absolute;left:93px;top:637px;height:22px;line-height:22px;white-space:nowrap;font-size:17px;color:#1b74d2;letter-spacing:0.15px;">Карточка работы</div>
<div style="position:absolute;left:325px;top:637px;height:22px;line-height:22px;white-space:nowrap;font-size:17px;color:#333;letter-spacing:0.15px;">Связи работы</div>
<div style="position:absolute;left:531px;top:637px;height:22px;line-height:22px;white-space:nowrap;font-size:17px;color:#333;letter-spacing:0.15px;">Связанные графики</div>
<div style="position:absolute;left:787px;top:637px;height:22px;line-height:22px;white-space:nowrap;font-size:17px;color:#333;letter-spacing:0.15px;">Справочники</div>
<div style="position:absolute;left:989px;top:637px;height:22px;line-height:22px;white-space:nowrap;font-size:17px;color:#333;letter-spacing:0.15px;">Суточное планирование</div>
<div style="position:absolute;left:1280px;top:637px;height:22px;line-height:22px;white-space:nowrap;font-size:17px;color:#333;letter-spacing:0.15px;">Фото / Документация</div>
<div style="position:absolute;left:1549px;top:637px;height:22px;line-height:22px;white-space:nowrap;font-size:17px;color:#333;letter-spacing:0.15px;">Запросы и поручения</div>
<div style="position:absolute;left:1818px;top:637px;height:22px;line-height:22px;white-space:nowrap;font-size:17px;color:#333;letter-spacing:0.15px;">Табели</div>
<div style="position:absolute;left:45px;top:666px;width:232px;height:2px;background:#1b74d2;"></div>
<div style="position:absolute;left:61px;top:686px;height:20px;line-height:20px;white-space:nowrap;font-size:13.6px;color:#111;font-weight:bold;">Тип</div>
<div style="position:absolute;left:61px;top:716px;height:20px;line-height:20px;white-space:nowrap;font-size:13.6px;color:#111;font-weight:bold;">Шифр</div>
<div style="position:absolute;left:61px;top:746px;height:20px;line-height:20px;white-space:nowrap;font-size:13.6px;color:#111;font-weight:bold;">Статус</div>
<div style="position:absolute;left:121px;top:685px;width:162px;height:22px;background:#fff;border:1px solid #bdbdc2;border-radius:3px;"></div>
<div style="position:absolute;left:132px;top:685px;height:21px;line-height:21px;white-space:nowrap;font-size:15px;color:#1f1f1f;">Работа</div>
<svg style="position:absolute;left:255px;top:693.0px;width:12px;height:7px;overflow:visible" viewBox="0 0 12 7" ><path d="M0.5 0.5h11l-5.5 6z" fill="#4a4a52"/></svg>
<div style="position:absolute;left:121px;top:715px;width:162px;height:22px;background:#fff;border:1px solid #bdbdc2;border-radius:3px;"></div>
<div style="position:absolute;left:132px;top:715px;height:21px;line-height:21px;white-space:nowrap;font-size:15px;color:#1f1f1f;">01.02</div>
<div style="position:absolute;left:121px;top:745px;width:162px;height:22px;background:#fff;border:1px solid #bdbdc2;border-radius:3px;"></div>
<div style="position:absolute;left:132px;top:745px;height:21px;line-height:21px;white-space:nowrap;font-size:15px;color:#1f1f1f;">Завершена</div>
<svg style="position:absolute;left:255px;top:753.0px;width:12px;height:7px;overflow:visible" viewBox="0 0 12 7" ><path d="M0.5 0.5h11l-5.5 6z" fill="#4a4a52"/></svg>
<div style="position:absolute;left:291px;top:685px;width:530px;height:50px;background:#fff;border:1px solid #bdbdc2;border-radius:4px;"></div>
<div style="position:absolute;left:303px;top:696px;height:24px;line-height:24px;white-space:nowrap;font-size:18px;font-weight:bold;color:#111;">Устройство котлована</div>
<div style="position:absolute;left:291px;top:745px;height:20px;line-height:20px;white-space:nowrap;font-size:15px;color:#1f1f1f;">Сценарий</div>
<div style="position:absolute;left:364px;top:743px;width:456px;height:22px;background:#efeff2;border-radius:4px;"></div>
<div style="position:absolute;left:482px;top:743px;height:22px;line-height:22px;white-space:nowrap;font-size:13.6px;color:#222;">Сценария нет</div>
<svg style="position:absolute;left:798.7px;top:745px;width:18px;height:18px;overflow:visible" viewBox="0 0 18 18" ><g fill="none" stroke="#222" stroke-width="1.4"><path d="M16.90 9.00 L16.88 9.41 L16.77 9.82 L16.42 10.18 L15.66 10.42 L15.07 10.63 L14.84 10.90 L14.70 11.19 L14.58 11.48 L14.47 11.79 L14.45 12.14 L14.71 12.71 L15.08 13.42 L15.07 13.92 L14.86 14.28 L14.59 14.59 L14.28 14.86 L13.92 15.07 L13.42 15.08 L12.71 14.71 L12.14 14.45 L11.79 14.47 L11.48 14.58 L11.19 14.70 L10.90 14.84 L10.63 15.07 L10.42 15.66 L10.18 16.42 L9.82 16.77 L9.41 16.88 L9.00 16.90 L8.59 16.88 L8.18 16.77 L7.82 16.42 L7.58 15.66 L7.37 15.07 L7.10 14.84 L6.81 14.70 L6.52 14.58 L6.21 14.47 L5.86 14.45 L5.29 14.71 L4.58 15.08 L4.08 15.07 L3.72 14.86 L3.41 14.59 L3.14 14.28 L2.93 13.92 L2.92 13.42 L3.29 12.71 L3.55 12.14 L3.53 11.79 L3.42 11.48 L3.30 11.19 L3.16 10.90 L2.93 10.63 L2.34 10.42 L1.58 10.18 L1.23 9.82 L1.12 9.41 L1.10 9.00 L1.12 8.59 L1.23 8.18 L1.58 7.82 L2.34 7.58 L2.93 7.37 L3.16 7.10 L3.30 6.81 L3.42 6.52 L3.53 6.21 L3.55 5.86 L3.29 5.29 L2.92 4.58 L2.93 4.08 L3.14 3.72 L3.41 3.41 L3.72 3.14 L4.08 2.93 L4.58 2.92 L5.29 3.29 L5.86 3.55 L6.21 3.53 L6.52 3.42 L6.81 3.30 L7.10 3.16 L7.37 2.93 L7.58 2.34 L7.82 1.58 L8.18 1.23 L8.59 1.12 L9.00 1.10 L9.41 1.12 L9.82 1.23 L10.18 1.58 L10.42 2.34 L10.63 2.93 L10.90 3.16 L11.19 3.30 L11.48 3.42 L11.79 3.53 L12.14 3.55 L12.71 3.29 L13.42 2.92 L13.92 2.93 L14.28 3.14 L14.59 3.41 L14.86 3.72 L15.07 4.08 L15.08 4.58 L14.71 5.29 L14.45 5.86 L14.47 6.21 L14.58 6.52 L14.70 6.81 L14.84 7.10 L15.07 7.37 L15.66 7.58 L16.42 7.82 L16.77 8.18 L16.88 8.59Z"/><path d="M6 6l2.8 3-2.8 3 M9.4 6l2.8 3-2.8 3"/></g></svg>
<div style="position:absolute;left:53px;top:775px;width:922px;height:24px;background:#1b74d2;"></div>
<div style="position:absolute;left:71px;top:775px;height:24px;line-height:24px;white-space:nowrap;font-size:15px;color:#fff;letter-spacing:0.6px;">02.05.2025 09:00</div>
<div style="position:absolute;left:497px;top:775px;height:24px;line-height:24px;white-space:nowrap;font-size:14.6px;color:#fff;">100 %</div>
<div style="position:absolute;left:820px;top:775px;height:24px;line-height:24px;white-space:nowrap;font-size:15px;color:#fff;letter-spacing:0.6px;">03.05.2025 18:00</div>
<svg style="position:absolute;left:204px;top:781px;width:12px;height:12px;overflow:visible" viewBox="0 0 12 12" ><g fill="none" stroke="#fff" stroke-width="1.5"><rect x="1" y="1.5" width="10" height="9.5" rx="1"/><path d="M1 3.8h10" stroke-width="2.2"/></g></svg>
<svg style="position:absolute;left:952px;top:781px;width:12px;height:12px;overflow:visible" viewBox="0 0 12 12" ><g fill="none" stroke="#fff" stroke-width="1.5"><rect x="1" y="1.5" width="10" height="9.5" rx="1"/><path d="M1 3.8h10" stroke-width="2.2"/></g></svg>
<div style="position:absolute;left:829px;top:685px;width:146px;height:82px;background:#fff;border:1.5px solid #1b74d2;border-radius:5px;"></div>
<div style="position:absolute;left:829px;top:685px;width:146px;height:34px;background:#1b74d2;border-radius:5px 5px 0 0;"></div>
<div style="position:absolute;left:860.5px;top:677px;width:9px;height:15px;background:#fff;border:1.5px solid #1b74d2;border-radius:3.5px;"></div>
<div style="position:absolute;left:933.5px;top:677px;width:9px;height:15px;background:#fff;border:1.5px solid #1b74d2;border-radius:3.5px;"></div>
<div style="position:absolute;left:829px;top:692px;width:146px;height:20px;line-height:20px;white-space:nowrap;font-size:13.4px;color:#fff;text-decoration:underline;text-align:center;">PLAN-R: 7 дней</div>
<svg style="position:absolute;left:840px;top:726px;width:18px;height:18px;overflow:visible" viewBox="0 0 18 18" ><g fill="none" stroke="#333" stroke-width="1.3" stroke-linecap="round"><path d="M2 2l7.5 7.5"/><path d="M8 9.5l3.5-3.5 4.5 4.5a2.5 2.5 0 0 1 0 3.5l-1.5 1.5a2.5 2.5 0 0 1-3.5 0z"/><path d="M1 3.5l2.5-2.5"/></g></svg>
<div style="position:absolute;left:866px;top:723px;width:71px;height:22px;background:#fff;border:1px solid #bdbdc2;border-radius:3px;"></div>
<div style="position:absolute;left:866px;top:723px;width:71px;height:22px;line-height:22px;white-space:nowrap;font-size:15px;color:#111;text-align:center;">16</div>
<div style="position:absolute;left:945px;top:724px;height:20px;line-height:20px;white-space:nowrap;font-size:12px;color:#222;">ч.</div>
<div style="position:absolute;left:829px;top:746px;width:146px;height:20px;line-height:20px;white-space:nowrap;font-size:12.9px;color:#111;text-align:center;">Календарных: 2 дн.</div>
<div style="position:absolute;left:53px;top:815px;height:20px;line-height:20px;white-space:nowrap;font-size:13.6px;color:#111;font-weight:bold;">Ограничения</div>
<div style="position:absolute;left:206px;top:822px;width:769px;height:3px;background:#b9b9c0;"></div>
<div style="position:absolute;left:53px;top:842px;height:20px;line-height:20px;white-space:nowrap;font-size:15px;color:#1f1f1f;">Начало</div>
<div style="position:absolute;left:120px;top:840px;width:149px;height:22px;background:#fff;border:1px solid #bdbdc2;border-radius:3px;"></div>
<div style="position:absolute;left:132px;top:840px;height:21px;line-height:21px;white-space:nowrap;font-size:15px;color:#1f1f1f;">Не раньше</div>
<svg style="position:absolute;left:241px;top:848.0px;width:12px;height:7px;overflow:visible" viewBox="0 0 12 7" ><path d="M0.5 0.5h11l-5.5 6z" fill="#4a4a52"/></svg>
<div style="position:absolute;left:277px;top:841px;height:20px;line-height:20px;white-space:nowrap;font-size:15px;color:#1f1f1f;letter-spacing:0.9px;">04.05.2025 09:00</div>
<svg style="position:absolute;left:414px;top:845px;width:12px;height:12px;overflow:visible" viewBox="0 0 12 12" ><g fill="none" stroke="#333" stroke-width="1.5"><rect x="1" y="1.5" width="10" height="9.5" rx="1"/><path d="M1 3.8h10" stroke-width="2.2"/></g></svg>
<svg style="position:absolute;left:430px;top:843px;width:16px;height:17px;overflow:visible" viewBox="0 0 16 17" ><g fill="none" stroke="#2ebd5b" stroke-width="1.5"><path d="M1.5 3a1.5 1.5 0 0 1 1.5-1.5h8.5l3 3v9.5a1.5 1.5 0 0 1-1.5 1.5h-10A1.5 1.5 0 0 1 1.5 13.5z M4.5 1.5v4h6v-4"/><circle cx="8" cy="11" r="1.5"/></g></svg>
<div style="position:absolute;left:558px;top:842px;height:20px;line-height:20px;white-space:nowrap;font-size:15px;color:#1f1f1f;">Окончание</div>
<div style="position:absolute;left:651px;top:840px;width:149px;height:22px;background:#fff;border:1px solid #bdbdc2;border-radius:3px;"></div>
<div style="position:absolute;left:662px;top:840px;height:21px;line-height:21px;white-space:nowrap;font-size:15.5px;color:#1f1f1f;">Не позже</div>
<svg style="position:absolute;left:772px;top:848.0px;width:12px;height:7px;overflow:visible" viewBox="0 0 12 7" ><path d="M0.5 0.5h11l-5.5 6z" fill="#4a4a52"/></svg>
<div style="position:absolute;left:808px;top:841px;height:20px;line-height:20px;white-space:nowrap;font-size:15px;color:#1f1f1f;letter-spacing:0.9px;">05.05.2025 18:00</div>
<svg style="position:absolute;left:943px;top:845px;width:12px;height:12px;overflow:visible" viewBox="0 0 12 12" ><g fill="none" stroke="#333" stroke-width="1.5"><rect x="1" y="1.5" width="10" height="9.5" rx="1"/><path d="M1 3.8h10" stroke-width="2.2"/></g></svg>
<svg style="position:absolute;left:958px;top:843px;width:16px;height:17px;overflow:visible" viewBox="0 0 16 17" ><g fill="none" stroke="#2ebd5b" stroke-width="1.5"><path d="M1.5 3a1.5 1.5 0 0 1 1.5-1.5h8.5l3 3v9.5a1.5 1.5 0 0 1-1.5 1.5h-10A1.5 1.5 0 0 1 1.5 13.5z M4.5 1.5v4h6v-4"/><circle cx="8" cy="11" r="1.5"/></g></svg>
<div style="position:absolute;left:53px;top:878px;width:40px;height:20px;background:#1b74d2;border-radius:4px;box-shadow:0 1px 2px rgba(0,0,0,.35);"></div>
<svg style="position:absolute;left:64px;top:881px;width:18px;height:14px;overflow:visible" viewBox="0 0 18 14" ><path d="M8 1.5L2.5 7 8 12.5 M14 1.5L8.5 7 14 12.5" fill="none" stroke="#fff" stroke-width="1.4"/></svg>
<div style="position:absolute;left:110px;top:879px;height:20px;line-height:20px;white-space:nowrap;font-size:15px;color:#1f1f1f;">Начало как можно раньше</div>
<div style="position:absolute;left:718px;top:879px;height:20px;line-height:20px;white-space:nowrap;font-size:15px;color:#1f1f1f;">Окончание как можно позже</div>
<div style="position:absolute;left:935px;top:878px;width:40px;height:20px;background:#1b74d2;border-radius:4px;box-shadow:0 1px 2px rgba(0,0,0,.35);"></div>
<svg style="position:absolute;left:946px;top:881px;width:18px;height:14px;overflow:visible" viewBox="0 0 18 14" ><path d="M4 1.5L9.5 7 4 12.5 M10 1.5L15.5 7 10 12.5" fill="none" stroke="#fff" stroke-width="1.4"/></svg>
<div style="position:absolute;left:983px;top:676px;width:1px;height:229px;background:#c8c8cc;"></div>
<div style="position:absolute;left:992px;top:695px;height:20px;line-height:20px;white-space:nowrap;font-size:13.3px;color:#111;font-weight:bold;">Атрибуты</div>
<div style="position:absolute;left:1082px;top:685px;width:831px;height:40px;background:#fff;border:1px solid #c4c4c8;border-radius:4px;"></div>
<div style="position:absolute;left:1094px;top:694px;height:20px;line-height:20px;white-space:nowrap;font-size:15px;color:#8a8a8f;">Поиск</div>
<div style="position:absolute;left:992px;top:744px;height:20px;line-height:20px;white-space:nowrap;font-size:14.8px;color:#1f1f1f;">Шифр</div>
<div style="position:absolute;left:1458px;top:744px;height:20px;line-height:20px;white-space:nowrap;font-size:15px;color:#1f1f1f;">01.02</div>
<div style="position:absolute;left:984px;top:775px;width:933px;height:1px;background:#c8c8cc;"></div>
<div style="position:absolute;left:992px;top:787px;height:20px;line-height:20px;white-space:nowrap;font-size:14.8px;color:#1f1f1f;">Наименование</div>
<div style="position:absolute;left:1458px;top:787px;height:20px;line-height:20px;white-space:nowrap;font-size:15px;color:#1f1f1f;">Устройство котлована</div>
<div style="position:absolute;left:984px;top:818px;width:933px;height:1px;background:#c8c8cc;"></div>
<div style="position:absolute;left:992px;top:829px;height:20px;line-height:20px;white-space:nowrap;font-size:14.8px;color:#1f1f1f;">Старт</div>
<div style="position:absolute;left:1458px;top:829px;height:20px;line-height:20px;white-space:nowrap;font-size:15px;color:#1f1f1f;">02.05.2025 09:00</div>
<div style="position:absolute;left:984px;top:860px;width:933px;height:1px;background:#c8c8cc;"></div>
<div style="position:absolute;left:992px;top:871px;height:20px;line-height:20px;white-space:nowrap;font-size:14.8px;color:#1f1f1f;">Финиш</div>
<div style="position:absolute;left:1458px;top:871px;height:20px;line-height:20px;white-space:nowrap;font-size:15px;color:#1f1f1f;">03.05.2025 18:00</div>
<div style="position:absolute;left:984px;top:902px;width:933px;height:1px;background:#c8c8cc;"></div>
<svg style="position:absolute;left:0;top:0;width:1917px;height:905px;pointer-events:none" viewBox="0 0 1917 905"><path d="M66.8 111V54" stroke="#000" stroke-width="3.2"/><path d="M61 55.5L66.8 43.5 72.6 55.5Z" fill="#000"/><ellipse cx="67.6" cy="129.3" rx="15" ry="17" fill="#fff" stroke="#000" stroke-width="3.6"/><text x="67.6" y="137.3" text-anchor="middle" font-family="Liberation Sans" font-size="23" fill="#000">1</text><path d="M507.5 111V54" stroke="#000" stroke-width="3.2"/><path d="M501.7 55.5L507.5 43.5 513.3 55.5Z" fill="#000"/><ellipse cx="509" cy="129.2" rx="15" ry="17" fill="#fff" stroke="#000" stroke-width="3.6"/><text x="509" y="137.2" text-anchor="middle" font-family="Liberation Sans" font-size="23" fill="#000">4</text><path d="M179 239.4H123" stroke="#000" stroke-width="3.2"/><path d="M125 233.8L113 239.4 125 245Z" fill="#000"/><ellipse cx="195.3" cy="238.9" rx="15" ry="17" fill="#fff" stroke="#000" stroke-width="3.6"/><text x="195.3" y="246.9" text-anchor="middle" font-family="Liberation Sans" font-size="23" fill="#000">3</text><path d="M825 239.7H883" stroke="#000" stroke-width="3.2"/><path d="M881 234.2L893.3 239.7 881 245.2Z" fill="#000"/><ellipse cx="809.1" cy="238.7" rx="15" ry="17" fill="#fff" stroke="#000" stroke-width="3.6"/><text x="809.1" y="246.7" text-anchor="middle" font-family="Liberation Sans" font-size="23" fill="#000">2</text></svg>
</body></html>
